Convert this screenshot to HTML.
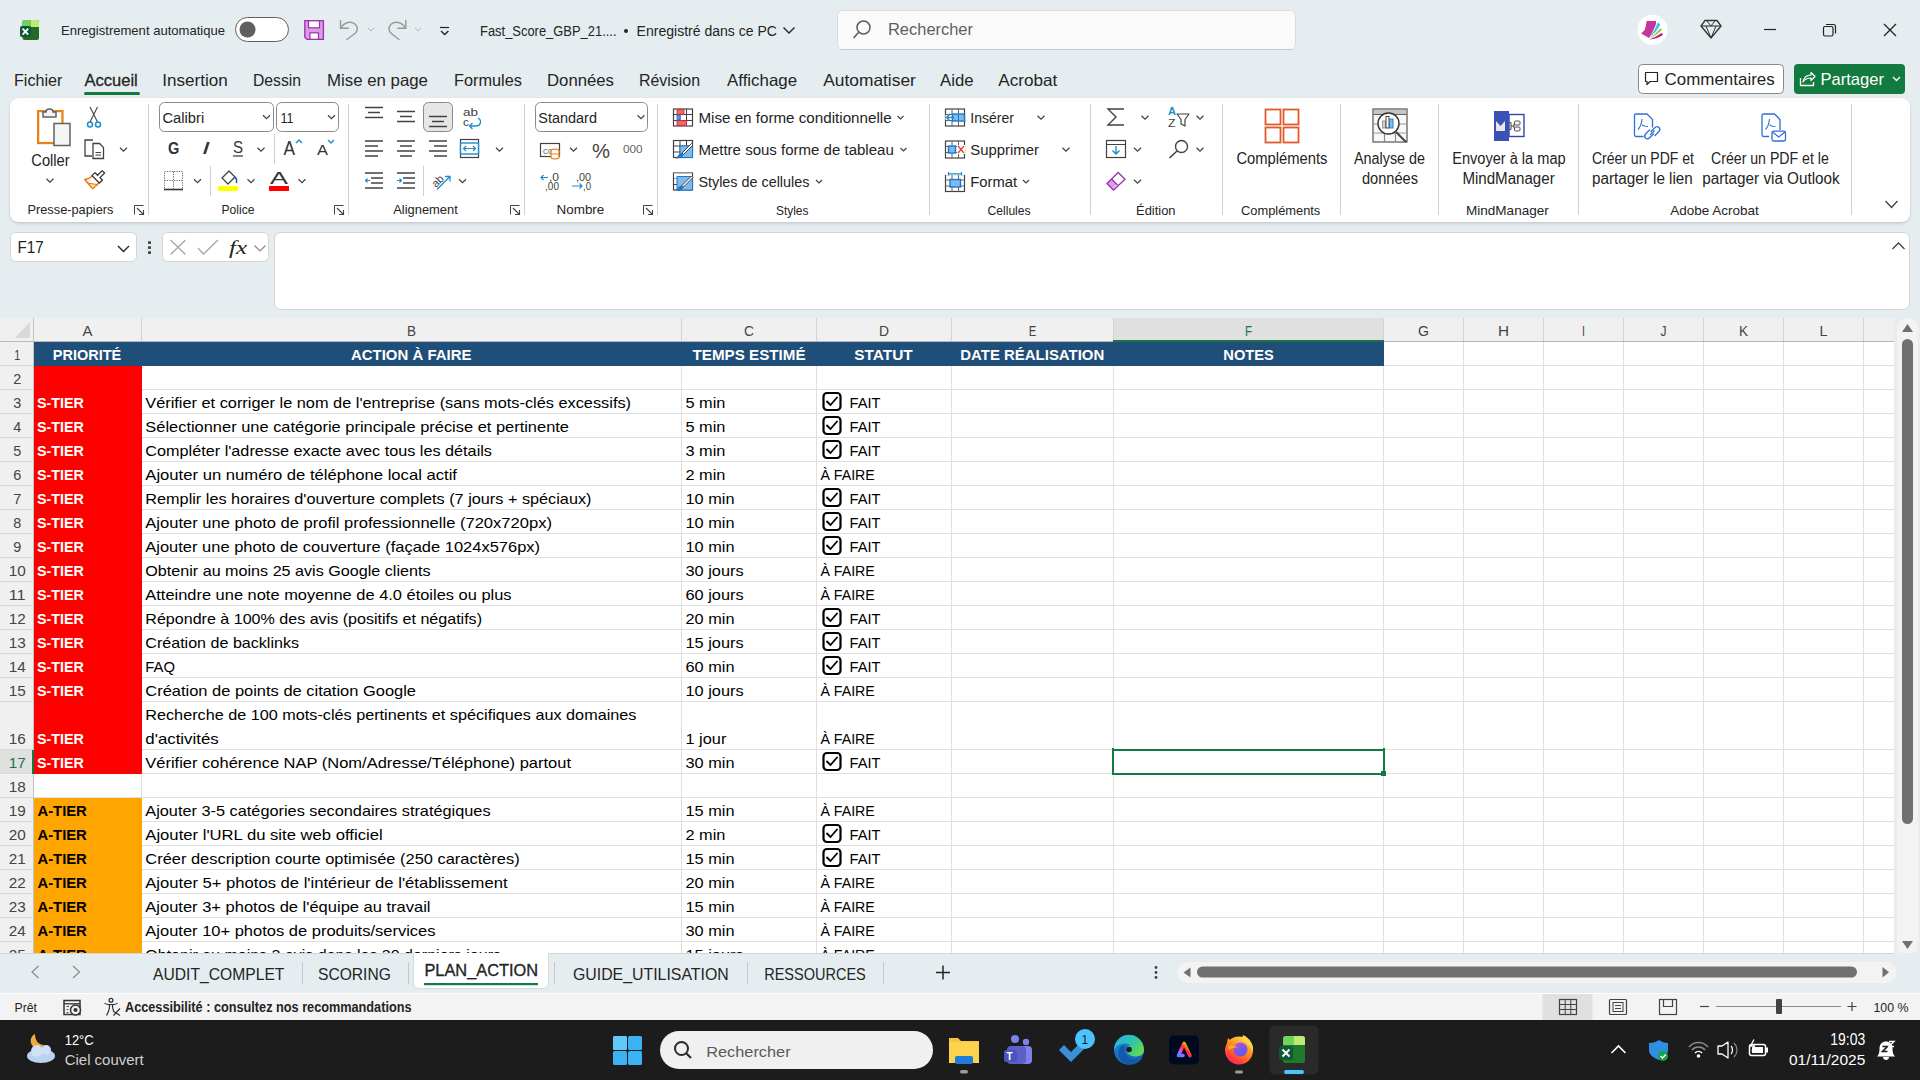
<!DOCTYPE html><html><head><meta charset="utf-8"><title>Excel</title><style>html,body{margin:0;padding:0;width:1920px;height:1080px;overflow:hidden;background:#e6edf0;}svg{display:block;font-family:"Liberation Sans",sans-serif;}</style></head><body>
<svg width="1920" height="1080" viewBox="0 0 1920 1080">
<rect x="0" y="0" width="1920" height="1080" fill="#e6edf0" />
<rect x="22.5" y="20" width="16.5" height="20" fill="#236b27" rx="2" />
<path d="M22.5 27 V22 Q22.5 20 24.5 20 H30.5 V27 Z" stroke="none" fill="#6fd35f" stroke-width="1" />
<path d="M30.5 20 H37 Q39 20 39 22 V27 H30.5 Z" stroke="none" fill="#bdea73" stroke-width="1" />
<rect x="20" y="26" width="11" height="11" fill="#0e5836" rx="2" />
<path d="M22.6 28.6 L28.2 34.6 M28.2 28.6 L22.6 34.6" stroke="#ffffff" fill="none" stroke-width="1.9" />
<text x="61.0" y="35" font-size="13.5" fill="#242424" textLength="163.97" lengthAdjust="spacingAndGlyphs" >Enregistrement automatique</text>
<rect x="235.5" y="17.5" width="53" height="24" fill="#ffffff" rx="12" stroke="#5f5f5f" stroke-width="1" />
<circle cx="247.5" cy="29.5" r="8" fill="#5f5f5f"/>
<path d="M304.8 20.6 H323.4 V39.4 H307 L304.8 37.2 Z" stroke="#9b2fae" fill="#dc9be6" stroke-width="1.3" />
<rect x="308.5" y="20.8" width="11" height="7" fill="#ffffff" stroke="#9b2fae" stroke-width="1.2" />
<rect x="310" y="32.8" width="8.5" height="6.5" fill="#ffffff" stroke="#9b2fae" stroke-width="1.2" />
<path d="M340.5 20 V28.3 H348.8" stroke="#999999" fill="none" stroke-width="1.4" />
<path d="M341 28 C344 22 352 20.5 355.5 24.5 C358 27.5 357.5 31 355 33.5 L346.5 39.7" stroke="#999999" fill="none" stroke-width="1.4" />
<path d="M368 28 L371 31 L374 28" stroke="#b0b4b8" fill="none" stroke-width="1" />
<path d="M405.8 20 V28.3 H397.3" stroke="#999999" fill="none" stroke-width="1.4" />
<path d="M405.3 28 C402.3 22 394.3 20.5 390.8 24.5 C388.3 27.5 388.8 31 391.3 33.5 L399.5 39.7" stroke="#999999" fill="none" stroke-width="1.4" />
<path d="M415 28 L418 31 L421 28" stroke="#b0b4b8" fill="none" stroke-width="1" />
<line x1="440" y1="27.5" x2="449" y2="27.5" stroke="#222" stroke-width="1.2" />
<path d="M441 31 L444.7 34.5 L448.4 31" stroke="#222" fill="none" stroke-width="1.3" />
<text x="480.0" y="36" font-size="15.3" fill="#242424" textLength="136.52" lengthAdjust="spacingAndGlyphs" >Fast_Score_GBP_21....</text>
<circle cx="626" cy="31" r="2" fill="#242424"/>
<text x="636.6" y="36" font-size="15.3" fill="#242424" textLength="140.4" lengthAdjust="spacingAndGlyphs" >Enregistré dans ce PC</text>
<path d="M783.5 27.5 L789 33 L794.5 27.5" stroke="#242424" fill="none" stroke-width="1.4" />
<rect x="837.5" y="10.5" width="458" height="39" fill="#fafafa" rx="5" stroke="#d9dcdf" stroke-width="1" />
<line x1="841" y1="49.5" x2="1292" y2="49.5" stroke="#c4c7cb" stroke-width="1" />
<circle cx="863.5" cy="27.5" r="6.5" fill="none" stroke="#5c5c5c" stroke-width="1.5"/>
<line x1="858.5" y1="32.5" x2="853.5" y2="38" stroke="#5c5c5c" stroke-width="1.6" />
<text x="888.0" y="35" font-size="16.0" fill="#5f5f5f" textLength="84.99" lengthAdjust="spacingAndGlyphs" >Rechercher</text>
<circle cx="1652.5" cy="29.8" r="15" fill="#ffffff"/>
<path d="M1646.7 21.1 H1656 Q1656.3 23 1655.7 25 Q1653 32 1649 37.9 L1641.2 33.4 Q1643.5 31.5 1644.7 30.1 Q1646 26 1646.7 21.1 Z" stroke="none" fill="#c8349a" stroke-width="1" />
<path d="M1657.5 22.8 Q1659.5 23.3 1660.3 24.8 Q1656 33 1648.6 37.8 Q1655 31 1657.5 22.8 Z" stroke="none" fill="#3bc3ef" stroke-width="1" />
<path d="M1660.3 28.2 Q1661.6 28.8 1662 29.8 Q1657 35.5 1649 38.3 Q1656 34 1660.3 28.2 Z" stroke="none" fill="#9fcd2f" stroke-width="1" />
<path d="M1661.6 33 Q1662.7 33.8 1663 35 Q1657 39 1649 39.5 Q1656 37 1661.6 33 Z" stroke="none" fill="#c8148c" stroke-width="1" />
<path d="M1705 20.5 H1717 L1721 26 L1711 38 L1701 26 Z" stroke="#333" fill="none" stroke-width="1.3" stroke-linejoin="round"/>
<line x1="1701" y1="26" x2="1721" y2="26" stroke="#333" stroke-width="1.1" />
<path d="M1707 21 L1711 26 L1715 21 M1706 26 L1711 38 L1716 26" stroke="#333" fill="none" stroke-width="1" />
<line x1="1764" y1="29.5" x2="1776" y2="29.5" stroke="#242424" stroke-width="1.2" />
<rect x="1823.5" y="26.5" width="9.5" height="9.5" fill="none" rx="1.5" stroke="#242424" stroke-width="1.2" />
<path d="M1826 24.5 H1833.5 Q1835.5 24.5 1835.5 26.5 V33.5" stroke="#242424" fill="none" stroke-width="1.2" />
<path d="M1884 24 L1896 36 M1896 24 L1884 36" stroke="#242424" fill="none" stroke-width="1.3" />
<text x="14.0" y="86" font-size="16.5" fill="#242424" textLength="48.41" lengthAdjust="spacingAndGlyphs" >Fichier</text>
<text x="84.4" y="86" font-size="16.5" fill="#242424" textLength="53.38" lengthAdjust="spacingAndGlyphs" stroke="#242424" stroke-width="0.3">Accueil</text>
<text x="162.3" y="86" font-size="16.5" fill="#242424" textLength="65.51" lengthAdjust="spacingAndGlyphs" >Insertion</text>
<text x="253.0" y="86" font-size="16.5" fill="#242424" textLength="48.03" lengthAdjust="spacingAndGlyphs" >Dessin</text>
<text x="327.0" y="86" font-size="16.5" fill="#242424" textLength="100.98" lengthAdjust="spacingAndGlyphs" >Mise en page</text>
<text x="454.0" y="86" font-size="16.5" fill="#242424" textLength="67.96" lengthAdjust="spacingAndGlyphs" >Formules</text>
<text x="547.0" y="86" font-size="16.5" fill="#242424" textLength="66.97" lengthAdjust="spacingAndGlyphs" >Données</text>
<text x="639.0" y="86" font-size="16.5" fill="#242424" textLength="61.0" lengthAdjust="spacingAndGlyphs" >Révision</text>
<text x="727.0" y="86" font-size="16.5" fill="#242424" textLength="70.03" lengthAdjust="spacingAndGlyphs" >Affichage</text>
<text x="823.3" y="86" font-size="16.5" fill="#242424" textLength="92.51" lengthAdjust="spacingAndGlyphs" >Automatiser</text>
<text x="940.0" y="86" font-size="16.5" fill="#242424" textLength="33.53" lengthAdjust="spacingAndGlyphs" >Aide</text>
<text x="998.3" y="86" font-size="16.5" fill="#242424" textLength="59.02" lengthAdjust="spacingAndGlyphs" >Acrobat</text>
<rect x="84" y="92" width="56" height="3" fill="#107c41" rx="1.5" />
<rect x="1638.5" y="64.5" width="145" height="29" fill="#ffffff" rx="4" stroke="#8a8a8a" stroke-width="1" />
<path d="M1645.5 72.5 H1657.5 V81.5 H1650 L1647 84.5 V81.5 H1645.5 Z" stroke="#242424" fill="none" stroke-width="1.2" stroke-linejoin="round"/>
<text x="1664.5" y="85" font-size="17.0" fill="#242424" textLength="110.24" lengthAdjust="spacingAndGlyphs" >Commentaires</text>
<rect x="1794" y="64" width="111" height="30" fill="#137b40" rx="4" />
<path d="M1800.5 78 V85.5 H1813.5 V82" stroke="#ffffff" fill="none" stroke-width="1.3" />
<path d="M1803 82 C1804 77 1807 75 1811 75 V72.5 L1815 76.5 L1811 80.5 V78 C1808 78 1805 79 1803 82 Z" stroke="#ffffff" fill="none" stroke-width="1.2" stroke-linejoin="round"/>
<text x="1820.5" y="85" font-size="17.0" fill="#ffffff" textLength="63.51" lengthAdjust="spacingAndGlyphs" >Partager</text>
<path d="M1893 77 L1896.5 80.5 L1900 77" stroke="#ffffff" fill="none" stroke-width="1.3" />
<defs><filter id="sh" x="-2%" y="-10%" width="104%" height="130%"><feDropShadow dx="0" dy="1.5" stdDeviation="1.6" flood-color="#000" flood-opacity="0.16"/></filter></defs>
<rect x="10" y="98" width="1900" height="124" fill="#ffffff" rx="9" filter="url(#sh)"/>
<rect x="38.1" y="111.1" width="24.4" height="32" fill="#fff6e6" stroke="#e8811a" stroke-width="2.2" />
<rect x="40" y="113" width="20" height="28" fill="#ffffff" />
<path d="M43 117 V112 H46 C46 108 53 108 53 112 H56 V117 Z" stroke="#616161" fill="#f5f5f5" stroke-width="1.5" />
<rect x="54" y="123.5" width="16" height="22" fill="#f5f5f5" stroke="#616161" stroke-width="1.5" />
<text x="31.3" y="165.5" font-size="16.3" fill="#242424" textLength="38.33" lengthAdjust="spacingAndGlyphs" >Coller</text>
<path d="M46.5 178.75 L50 182.25 L53.5 178.75" stroke="#424242" fill="none" stroke-width="1.2" />
<path d="M90 107 L97.5 122 M97.5 107 L90 122" stroke="#424242" fill="none" stroke-width="1.1" />
<circle cx="90" cy="124.5" r="2.5" fill="none" stroke="#1e8bcd" stroke-width="1.5"/><circle cx="98" cy="124.5" r="2.5" fill="none" stroke="#1e8bcd" stroke-width="1.5"/>
<path d="M93 140 H85 V156 H92" stroke="#424242" fill="none" stroke-width="1.3" />
<path d="M93 143.5 H99.5 L103.5 147.5 V158.5 H93 Z" stroke="#424242" fill="#fff" stroke-width="1.3" />
<line x1="95.5" y1="152.5" x2="101" y2="152.5" stroke="#424242" stroke-width="1" />
<line x1="95.5" y1="155" x2="101" y2="155" stroke="#424242" stroke-width="1" />
<path d="M120.0 147.75 L123.5 151.25 L127.0 147.75" stroke="#424242" fill="none" stroke-width="1.2" />
<path d="M92.5 176 Q89 178.8 84.8 179.6 L92.6 188.6 Q96 186 99 182.8" stroke="#e07a10" fill="#ffffff" stroke-width="1.6" stroke-linejoin="round"/>
<path d="M88.3 183.2 L97.6 184.6 L92.6 188.4 Z" stroke="#e07a10" fill="#f7df8c" stroke-width="1" />
<path d="M92 175.6 L95 172.6 L97.6 175.2 L102.2 170.6 L104.6 173 L100 177.6 L102.4 180 L99.4 183 Z" stroke="#333333" fill="#ffffff" stroke-width="1.3" stroke-linejoin="round"/>
<text x="27.5" y="214" font-size="12.6" fill="#242424" textLength="85.9" lengthAdjust="spacingAndGlyphs" >Presse-papiers</text>
<path d="M134.5 214.5 V205.5 H143.5" stroke="#424242" fill="none" stroke-width="1" />
<path d="M137 208 L143.5 214.5 M143.5 210 V214.5 H139" stroke="#424242" fill="none" stroke-width="1.1" />
<line x1="148.5" y1="104" x2="148.5" y2="215" stroke="#d0d0d0" stroke-width="1" />
<rect x="159.5" y="102.5" width="114" height="29" fill="#ffffff" rx="5" stroke="#8a8a8a" stroke-width="1" />
<text x="162.4" y="123" font-size="15.5" fill="#242424" textLength="41.79" lengthAdjust="spacingAndGlyphs" >Calibri</text>
<path d="M263.0 115.25 L266.5 118.75 L270.0 115.25" stroke="#424242" fill="none" stroke-width="1.2" />
<rect x="276.5" y="102.5" width="62" height="29" fill="#ffffff" rx="5" stroke="#8a8a8a" stroke-width="1" />
<text x="280.5" y="123" font-size="15.5" fill="#242424" textLength="12.98" lengthAdjust="spacingAndGlyphs" >11</text>
<path d="M328.0 115.25 L331.5 118.75 L335.0 115.25" stroke="#424242" fill="none" stroke-width="1.2" />
<text x="167.9" y="153.5" font-size="16.5" fill="#333" font-weight="700" textLength="11.37" lengthAdjust="spacingAndGlyphs" >G</text>
<text x="202.0" y="153.5" font-size="16.5" fill="#333" font-style="italic" textLength="7.94" lengthAdjust="spacingAndGlyphs" >I</text>
<text x="233.0" y="153" font-size="16.0" fill="#333" textLength="10.03" lengthAdjust="spacingAndGlyphs" >S</text>
<line x1="233" y1="156" x2="243" y2="156" stroke="#333" stroke-width="1.2" />
<path d="M257.5 147.75 L261 151.25 L264.5 147.75" stroke="#424242" fill="none" stroke-width="1.2" />
<line x1="274.5" y1="134" x2="274.5" y2="164" stroke="#d0d0d0" stroke-width="1" />
<text x="283.4" y="154.8" font-size="20.0" fill="#333" textLength="11.55" lengthAdjust="spacingAndGlyphs" >A</text>
<path d="M296 143 L299 140 L302 143" stroke="#1e8bcd" fill="none" stroke-width="1.4" />
<text x="317.0" y="154.8" font-size="15.5" fill="#333" textLength="10.95" lengthAdjust="spacingAndGlyphs" >A</text>
<path d="M328 140 L331 143 L334 140" stroke="#1e8bcd" fill="none" stroke-width="1.4" />
<rect x="164.5" y="171.5" width="18" height="18" fill="none" stroke="#666" stroke-width="1" stroke-dasharray="1.2 1.2"/>
<line x1="173.5" y1="171.5" x2="173.5" y2="189.5" stroke="#666" stroke-width="1" stroke-dasharray="1.2 1.2"/>
<line x1="164.5" y1="180.5" x2="182.5" y2="180.5" stroke="#666" stroke-width="1" stroke-dasharray="1.2 1.2"/>
<line x1="164" y1="189.5" x2="183" y2="189.5" stroke="#333" stroke-width="1.6" />
<path d="M194.0 179.25 L197.5 182.75 L201.0 179.25" stroke="#424242" fill="none" stroke-width="1.2" />
<line x1="210.5" y1="166" x2="210.5" y2="196" stroke="#d0d0d0" stroke-width="1" />
<path d="M222 178 L229 171 L235 177 L228 184 Z" stroke="#424242" fill="#fff" stroke-width="1.3" stroke-linejoin="round"/>
<path d="M234 178 C236 176 237 180 236.5 183" stroke="#1e5aa8" fill="none" stroke-width="1.6" />
<rect x="218" y="186" width="20" height="5" fill="#ffff00" />
<path d="M247.5 179.25 L251 182.75 L254.5 179.25" stroke="#424242" fill="none" stroke-width="1.2" />
<text x="270.0" y="183.5" font-size="17.0" fill="#333" textLength="17.92" lengthAdjust="spacingAndGlyphs" >A</text>
<rect x="269" y="186" width="20" height="5" fill="#ff0000" />
<path d="M298.5 179.25 L302 182.75 L305.5 179.25" stroke="#424242" fill="none" stroke-width="1.2" />
<text x="221.4" y="214" font-size="12.6" fill="#242424" textLength="33.08" lengthAdjust="spacingAndGlyphs" >Police</text>
<path d="M334.5 214.5 V205.5 H343.5" stroke="#424242" fill="none" stroke-width="1" />
<path d="M337 208 L343.5 214.5 M343.5 210 V214.5 H339" stroke="#424242" fill="none" stroke-width="1.1" />
<line x1="348.5" y1="104" x2="348.5" y2="215" stroke="#d0d0d0" stroke-width="1" />
<line x1="365" y1="107.5" x2="383" y2="107.5" stroke="#424242" stroke-width="1.5" />
<line x1="368" y1="112.5" x2="380" y2="112.5" stroke="#424242" stroke-width="1.5" />
<line x1="365" y1="117.5" x2="383" y2="117.5" stroke="#424242" stroke-width="1.5" />
<line x1="397" y1="111.5" x2="415" y2="111.5" stroke="#424242" stroke-width="1.5" />
<line x1="400" y1="116.5" x2="412" y2="116.5" stroke="#424242" stroke-width="1.5" />
<line x1="397" y1="121.5" x2="415" y2="121.5" stroke="#424242" stroke-width="1.5" />
<rect x="423.5" y="102.5" width="29" height="29" fill="#e6e6e6" rx="5" stroke="#8a8a8a" stroke-width="1" />
<line x1="429" y1="116.5" x2="447" y2="116.5" stroke="#424242" stroke-width="1.5" />
<line x1="432" y1="121.5" x2="444" y2="121.5" stroke="#424242" stroke-width="1.5" />
<line x1="429" y1="126.5" x2="447" y2="126.5" stroke="#424242" stroke-width="1.5" />
<text x="463.0" y="116" font-size="11.0" fill="#424242" textLength="15.03" lengthAdjust="spacingAndGlyphs" >ab</text>
<text x="463.0" y="125.5" font-size="11.0" fill="#424242" textLength="6.0" lengthAdjust="spacingAndGlyphs" >c</text>
<path d="M478 118 C482 120 481 126 476 126 H470 M472.5 123 L469.5 126 L472.5 129" stroke="#1e8bcd" fill="none" stroke-width="1.3" />
<line x1="365" y1="141" x2="383" y2="141" stroke="#424242" stroke-width="1.5" />
<line x1="365" y1="146" x2="378" y2="146" stroke="#424242" stroke-width="1.5" />
<line x1="365" y1="151" x2="383" y2="151" stroke="#424242" stroke-width="1.5" />
<line x1="365" y1="156" x2="378" y2="156" stroke="#424242" stroke-width="1.5" />
<line x1="397" y1="141" x2="415" y2="141" stroke="#424242" stroke-width="1.5" />
<line x1="400" y1="146" x2="412" y2="146" stroke="#424242" stroke-width="1.5" />
<line x1="397" y1="151" x2="415" y2="151" stroke="#424242" stroke-width="1.5" />
<line x1="400" y1="156" x2="412" y2="156" stroke="#424242" stroke-width="1.5" />
<line x1="429" y1="141" x2="447" y2="141" stroke="#424242" stroke-width="1.5" />
<line x1="434" y1="146" x2="447" y2="146" stroke="#424242" stroke-width="1.5" />
<line x1="429" y1="151" x2="447" y2="151" stroke="#424242" stroke-width="1.5" />
<line x1="434" y1="156" x2="447" y2="156" stroke="#424242" stroke-width="1.5" />
<rect x="460.5" y="139.5" width="18" height="18" fill="none" stroke="#424242" stroke-width="1.2" />
<rect x="460.5" y="143" width="18" height="11" fill="#ffffff" stroke="#1e8bcd" stroke-width="1.4" />
<path d="M463.5 148.5 H475.5 M466 146 L463.5 148.5 L466 151 M473 146 L475.5 148.5 L473 151" stroke="#1e8bcd" fill="none" stroke-width="1.2" />
<path d="M496.0 147.75 L499.5 151.25 L503.0 147.75" stroke="#424242" fill="none" stroke-width="1.2" />
<line x1="365" y1="173" x2="383" y2="173" stroke="#424242" stroke-width="1.5" />
<line x1="371" y1="178" x2="383" y2="178" stroke="#424242" stroke-width="1.5" />
<line x1="371" y1="183" x2="383" y2="183" stroke="#424242" stroke-width="1.5" />
<line x1="365" y1="188" x2="383" y2="188" stroke="#424242" stroke-width="1.5" />
<path d="M370 180.5 H365.5 M367.5 178.5 L365.5 180.5 L367.5 182.5" stroke="#1e8bcd" fill="none" stroke-width="1.2" />
<line x1="397" y1="173" x2="415" y2="173" stroke="#424242" stroke-width="1.5" />
<line x1="403" y1="178" x2="415" y2="178" stroke="#424242" stroke-width="1.5" />
<line x1="403" y1="183" x2="415" y2="183" stroke="#424242" stroke-width="1.5" />
<line x1="397" y1="188" x2="415" y2="188" stroke="#424242" stroke-width="1.5" />
<path d="M397 180.5 H401.5 M399.5 178.5 L401.5 180.5 L399.5 182.5" stroke="#1e8bcd" fill="none" stroke-width="1.2" />
<line x1="423.5" y1="166" x2="423.5" y2="196" stroke="#d0d0d0" stroke-width="1" />
<text x="431" y="186" font-size="11" fill="#424242" transform="rotate(-45 436 181)">ab</text>
<line x1="437" y1="189.5" x2="450" y2="176.5" stroke="#1e8bcd" stroke-width="1.3" />
<path d="M445 176.5 H450 V181.5" stroke="#1e8bcd" fill="none" stroke-width="1.3" />
<path d="M459.0 179.25 L462.5 182.75 L466.0 179.25" stroke="#424242" fill="none" stroke-width="1.2" />
<text x="393.2" y="214" font-size="12.6" fill="#242424" textLength="64.58" lengthAdjust="spacingAndGlyphs" >Alignement</text>
<path d="M510.5 214.5 V205.5 H519.5" stroke="#424242" fill="none" stroke-width="1" />
<path d="M513 208 L519.5 214.5 M519.5 210 V214.5 H515" stroke="#424242" fill="none" stroke-width="1.1" />
<line x1="524.5" y1="104" x2="524.5" y2="215" stroke="#d0d0d0" stroke-width="1" />
<rect x="535.5" y="102.5" width="112" height="29" fill="#ffffff" rx="5" stroke="#8a8a8a" stroke-width="1" />
<text x="538.3" y="123" font-size="15.5" fill="#242424" textLength="58.68" lengthAdjust="spacingAndGlyphs" >Standard</text>
<path d="M637.5 115.25 L641 118.75 L644.5 115.25" stroke="#424242" fill="none" stroke-width="1.2" />
<rect x="540.5" y="143.5" width="19" height="13" fill="none" stroke="#424242" stroke-width="1.2" />
<text x="543.0" y="153.5" font-size="8.0" fill="#424242" textLength="10.0" lengthAdjust="spacingAndGlyphs" >CC</text>
<ellipse cx="555" cy="151" rx="4" ry="1.8" fill="#fff" stroke="#e8811a" stroke-width="1.3"/>
<path d="M551 151 V157 C551 159.5 559 159.5 559 157 V151" stroke="#e8811a" fill="#fff" stroke-width="1.3" />
<line x1="551" y1="154" x2="559" y2="154" stroke="#e8811a" stroke-width="1" />
<path d="M570.0 147.75 L573.5 151.25 L577.0 147.75" stroke="#424242" fill="none" stroke-width="1.2" />
<text x="592.0" y="157.5" font-size="21.0" fill="#424242" textLength="17.98" lengthAdjust="spacingAndGlyphs" >%</text>
<text x="623.0" y="153" font-size="11.0" fill="#616161" textLength="19.58" lengthAdjust="spacingAndGlyphs" >000</text>
<text x="549.0" y="181" font-size="10.0" fill="#424242" textLength="9.99" lengthAdjust="spacingAndGlyphs" >,0</text>
<text x="545.0" y="190" font-size="10.0" fill="#424242" textLength="14.0" lengthAdjust="spacingAndGlyphs" >,00</text>
<path d="M548 177.5 H541 M543.5 175 L541 177.5 L543.5 180" stroke="#1e8bcd" fill="none" stroke-width="1.2" />
<text x="576.0" y="181" font-size="10.0" fill="#424242" textLength="15.0" lengthAdjust="spacingAndGlyphs" >,00</text>
<text x="583.0" y="190" font-size="10.0" fill="#424242" textLength="7.99" lengthAdjust="spacingAndGlyphs" >,0</text>
<path d="M572 186 H582 M579.5 183.5 L582 186 L579.5 188.5" stroke="#1e8bcd" fill="none" stroke-width="1.2" />
<text x="556.5" y="214" font-size="12.6" fill="#242424" textLength="47.82" lengthAdjust="spacingAndGlyphs" >Nombre</text>
<path d="M643.5 214.5 V205.5 H652.5" stroke="#424242" fill="none" stroke-width="1" />
<path d="M646 208 L652.5 214.5 M652.5 210 V214.5 H648" stroke="#424242" fill="none" stroke-width="1.1" />
<line x1="657.5" y1="104" x2="657.5" y2="215" stroke="#d0d0d0" stroke-width="1" />
<rect x="673.5" y="109.0" width="19" height="17" fill="#ffffff" stroke="#424242" stroke-width="1.2" />
<line x1="673.5" y1="114.5" x2="692.5" y2="114.5" stroke="#424242" stroke-width="1" />
<line x1="673.5" y1="120.5" x2="692.5" y2="120.5" stroke="#424242" stroke-width="1" />
<line x1="680" y1="109.0" x2="680" y2="126.0" stroke="#424242" stroke-width="1" />
<line x1="686.5" y1="109.0" x2="686.5" y2="126.0" stroke="#424242" stroke-width="1" />
<rect x="677" y="109.7" width="7" height="4.6" fill="#f06a74" stroke="#d9262f" stroke-width="0.9" />
<rect x="677" y="115.3" width="3" height="4.4" fill="#4fa3e0" stroke="#1e78c8" stroke-width="0.9" />
<rect x="677" y="120.7" width="9.5" height="4.6" fill="#f06a74" stroke="#d9262f" stroke-width="0.9" />
<text x="698.4" y="122.8" font-size="15.2" fill="#242424" textLength="193.19" lengthAdjust="spacingAndGlyphs" >Mise en forme conditionnelle</text>
<path d="M897.5 116.0 L900.5 119.0 L903.5 116.0" stroke="#424242" fill="none" stroke-width="1.2" />
<rect x="673.5" y="140.5" width="19" height="17" fill="#ffffff" stroke="#424242" stroke-width="1.2" />
<line x1="673.5" y1="146" x2="692.5" y2="146" stroke="#424242" stroke-width="1" />
<line x1="673.5" y1="152" x2="692.5" y2="152" stroke="#424242" stroke-width="1" />
<line x1="680" y1="140.5" x2="680" y2="157.5" stroke="#424242" stroke-width="1" />
<line x1="686.5" y1="140.5" x2="686.5" y2="157.5" stroke="#424242" stroke-width="1" />
<path d="M680 146 H692.5 V157.5 H680 Z" stroke="#1e78c8" fill="#7fbbea" stroke-width="1" />
<path d="M682 153 L691.5 143.5 L693 145 L683.5 154.5 Z" stroke="#424242" fill="#ffffff" stroke-width="1" />
<path d="M682 153 C679 153 678 156 676 158.5 C680 158.5 683 157 683.5 154.5 Z" stroke="none" fill="#1e78c8" stroke-width="1" />
<text x="698.4" y="155" font-size="15.2" fill="#242424" textLength="195.38" lengthAdjust="spacingAndGlyphs" >Mettre sous forme de tableau</text>
<path d="M900.5 148.0 L903.5 151.0 L906.5 148.0" stroke="#424242" fill="none" stroke-width="1.2" />
<rect x="673.5" y="173.0" width="19" height="17" fill="#ffffff" stroke="#424242" stroke-width="1.2" />
<line x1="673.5" y1="178.5" x2="692.5" y2="178.5" stroke="#424242" stroke-width="1" />
<line x1="673.5" y1="184.5" x2="692.5" y2="184.5" stroke="#424242" stroke-width="1" />
<line x1="680" y1="173.0" x2="680" y2="190.0" stroke="#424242" stroke-width="1" />
<line x1="686.5" y1="173.0" x2="686.5" y2="190.0" stroke="#424242" stroke-width="1" />
<rect x="674" y="173.5" width="18" height="5" fill="#ffffff" />
<path d="M677 176.5 H692.5 V190.0 H677 Z" stroke="#1e78c8" fill="#7fbbea" stroke-width="1" />
<path d="M682 185.5 L691.5 176.0 L693 177.5 L683.5 187.0 Z" stroke="#424242" fill="#ffffff" stroke-width="1" />
<path d="M682 185.5 C679 185.5 678 188.5 676 191.0 C680 191.0 683 189.5 683.5 187.0 Z" stroke="none" fill="#1e78c8" stroke-width="1" />
<text x="698.4" y="187" font-size="15.2" fill="#242424" textLength="111.02" lengthAdjust="spacingAndGlyphs" >Styles de cellules</text>
<path d="M816 180.0 L819 183.0 L822 180.0" stroke="#424242" fill="none" stroke-width="1.2" />
<text x="776.0" y="215" font-size="12.6" fill="#242424" textLength="32.38" lengthAdjust="spacingAndGlyphs" >Styles</text>
<line x1="929.5" y1="104" x2="929.5" y2="215" stroke="#d0d0d0" stroke-width="1" />
<text x="970.3" y="122.8" font-size="15.2" fill="#242424" textLength="43.73" lengthAdjust="spacingAndGlyphs" >Insérer</text>
<rect x="945.5" y="109.0" width="19" height="17" fill="#ffffff" stroke="#424242" stroke-width="1.2" />
<line x1="945.5" y1="114.5" x2="964.5" y2="114.5" stroke="#616161" stroke-width="1" />
<line x1="945.5" y1="120.5" x2="964.5" y2="120.5" stroke="#616161" stroke-width="1" />
<line x1="952" y1="109.0" x2="952" y2="126.0" stroke="#616161" stroke-width="1" />
<line x1="958.5" y1="109.0" x2="958.5" y2="126.0" stroke="#616161" stroke-width="1" />
<rect x="952.5" y="114.0" width="12" height="7" fill="#7fbbea" stroke="#1e78c8" stroke-width="1.4" />
<line x1="958.5" y1="114.5" x2="958.5" y2="120.5" stroke="#1e78c8" stroke-width="1" />
<rect x="945.5" y="115.0" width="6" height="5" fill="#ffffff" />
<path d="M954 117.5 H946.5 M950 114.0 L946.5 117.5 L950 121.0" stroke="#1e8bcd" fill="none" stroke-width="1.4" />
<path d="M1037.5 115.75 L1041 119.25 L1044.5 115.75" stroke="#424242" fill="none" stroke-width="1.2" />
<rect x="945.5" y="141.0" width="19" height="17" fill="#ffffff" stroke="#424242" stroke-width="1.2" />
<line x1="945.5" y1="146.5" x2="964.5" y2="146.5" stroke="#616161" stroke-width="1" />
<line x1="945.5" y1="152.5" x2="964.5" y2="152.5" stroke="#616161" stroke-width="1" />
<line x1="952" y1="141.0" x2="952" y2="158.0" stroke="#616161" stroke-width="1" />
<line x1="958.5" y1="141.0" x2="958.5" y2="158.0" stroke="#616161" stroke-width="1" />
<rect x="948.5" y="146.0" width="7" height="7" fill="#7fbbea" stroke="#1e78c8" stroke-width="1.4" />
<rect x="957" y="145.0" width="8" height="9" fill="#ffffff" />
<path d="M958 146.0 L964 153.0 M964 146.0 L958 153.0" stroke="#e8412b" fill="none" stroke-width="1.3" />
<text x="970.3" y="155" font-size="15.2" fill="#242424" textLength="68.67" lengthAdjust="spacingAndGlyphs" >Supprimer</text>
<path d="M1062.5 147.75 L1066 151.25 L1069.5 147.75" stroke="#424242" fill="none" stroke-width="1.2" />
<rect x="945.5" y="174.5" width="19" height="17" fill="#ffffff" stroke="#424242" stroke-width="1.2" />
<line x1="945.5" y1="180" x2="964.5" y2="180" stroke="#616161" stroke-width="1" />
<line x1="945.5" y1="186" x2="964.5" y2="186" stroke="#616161" stroke-width="1" />
<line x1="952" y1="174.5" x2="952" y2="191.5" stroke="#616161" stroke-width="1" />
<line x1="958.5" y1="174.5" x2="958.5" y2="191.5" stroke="#616161" stroke-width="1" />
<rect x="945" y="172" width="20" height="3" fill="#ffffff" />
<path d="M948.5 172 V175.5 M961.5 172 V175.5 M948.5 173.8 H961.5" stroke="#1e8bcd" fill="none" stroke-width="1.2" />
<rect x="950" y="179.5" width="10.5" height="7.5" fill="#7fbbea" stroke="#1e78c8" stroke-width="1.4" />
<text x="970.3" y="187" font-size="15.2" fill="#242424" textLength="46.73" lengthAdjust="spacingAndGlyphs" >Format</text>
<path d="M1023 180.0 L1026 183.0 L1029 180.0" stroke="#424242" fill="none" stroke-width="1.2" />
<text x="987.5" y="215" font-size="12.6" fill="#242424" textLength="43.13" lengthAdjust="spacingAndGlyphs" >Cellules</text>
<line x1="1090.5" y1="104" x2="1090.5" y2="215" stroke="#d0d0d0" stroke-width="1" />
<path d="M1124 109 H1108 L1116 117 L1108 125 H1124" stroke="#424242" fill="none" stroke-width="1.4" />
<path d="M1141.5 115.75 L1145 119.25 L1148.5 115.75" stroke="#424242" fill="none" stroke-width="1.2" />
<text x="1168.0" y="115" font-size="10.0" fill="#1e8bcd" font-weight="700" textLength="8.02" lengthAdjust="spacingAndGlyphs" >A</text>
<text x="1168.0" y="126.5" font-size="10.0" fill="#424242" textLength="7.51" lengthAdjust="spacingAndGlyphs" >Z</text>
<path d="M1177 114 H1189 L1185 119.5 V126 L1181 124 V119.5 Z" stroke="#424242" fill="none" stroke-width="1.2" stroke-linejoin="round"/>
<path d="M1196.5 115.75 L1200 119.25 L1203.5 115.75" stroke="#424242" fill="none" stroke-width="1.2" />
<rect x="1106.5" y="140.5" width="19" height="17" fill="#ffffff" stroke="#424242" stroke-width="1.2" />
<line x1="1106.5" y1="144.5" x2="1125.5" y2="144.5" stroke="#424242" stroke-width="1" />
<path d="M1116 146 V154 M1112.5 150.5 L1116 154 L1119.5 150.5" stroke="#1e8bcd" fill="none" stroke-width="1.4" />
<path d="M1134.0 147.75 L1137.5 151.25 L1141.0 147.75" stroke="#424242" fill="none" stroke-width="1.2" />
<circle cx="1181.5" cy="146.5" r="6" fill="none" stroke="#424242" stroke-width="1.4"/>
<line x1="1177" y1="151" x2="1169.5" y2="158" stroke="#424242" stroke-width="1.6" />
<path d="M1196.5 147.75 L1200 151.25 L1203.5 147.75" stroke="#424242" fill="none" stroke-width="1.2" />
<path d="M1107 183.5 L1111.5 179 L1117 184.5 L1113 189 Z" stroke="none" fill="#dc9ee6" stroke-width="1" />
<path d="M1107 183.5 L1118.2 172.5 L1125 179.2 L1113.5 190 Z" stroke="#9b2fae" fill="none" stroke-width="1.3" stroke-linejoin="miter"/>
<path d="M1111.5 179 L1117.5 185" stroke="#9b2fae" fill="none" stroke-width="1.3" />
<path d="M1134.0 179.75 L1137.5 183.25 L1141.0 179.75" stroke="#424242" fill="none" stroke-width="1.2" />
<text x="1136.0" y="215" font-size="12.6" fill="#242424" textLength="39.57" lengthAdjust="spacingAndGlyphs" >Édition</text>
<line x1="1222.5" y1="104" x2="1222.5" y2="215" stroke="#d0d0d0" stroke-width="1" />
<rect x="1265.5" y="109.5" width="15" height="15" fill="none" stroke="#e05a2b" stroke-width="1.8" />
<rect x="1283.5" y="109.5" width="15" height="15" fill="none" stroke="#e05a2b" stroke-width="1.8" />
<rect x="1265.5" y="127.5" width="15" height="15" fill="none" stroke="#e05a2b" stroke-width="1.8" />
<rect x="1283.5" y="127.5" width="15" height="15" fill="none" stroke="#e05a2b" stroke-width="1.8" />
<text x="1236.4" y="163.7" font-size="16.0" fill="#242424" textLength="91.09" lengthAdjust="spacingAndGlyphs" >Compléments</text>
<text x="1241.0" y="215" font-size="12.6" fill="#242424" textLength="79.29" lengthAdjust="spacingAndGlyphs" >Compléments</text>
<line x1="1340.5" y1="104" x2="1340.5" y2="215" stroke="#d0d0d0" stroke-width="1" />
<rect x="1373" y="109" width="34" height="33" fill="#f8f8f8" stroke="#616161" stroke-width="1.3" />
<rect x="1374" y="110" width="32" height="4" fill="#c4c4c4" />
<line x1="1373" y1="114.5" x2="1407" y2="114.5" stroke="#616161" stroke-width="1.2" />
<line x1="1373" y1="124" x2="1407" y2="124" stroke="#9a9a9a" stroke-width="1" />
<line x1="1373" y1="133" x2="1407" y2="133" stroke="#9a9a9a" stroke-width="1" />
<line x1="1384.5" y1="133" x2="1384.5" y2="142" stroke="#8a8a8a" stroke-width="1.2" />
<line x1="1395.5" y1="133" x2="1395.5" y2="142" stroke="#8a8a8a" stroke-width="1.2" />
<circle cx="1388.5" cy="123.5" r="10.5" fill="#ffffff" stroke="#333333" stroke-width="1.4"/>
<rect x="1382.5" y="121" width="3" height="7" fill="#d0d0d0" stroke="#8a8a8a" stroke-width="0.8" />
<rect x="1386" y="116.5" width="3" height="11.5" fill="#ffffff" stroke="#333" stroke-width="0.9" />
<rect x="1389.5" y="119" width="3.5" height="9" fill="#7fbbea" stroke="#1e78c8" stroke-width="0.9" />
<line x1="1396" y1="132" x2="1406" y2="142" stroke="#424242" stroke-width="2" />
<text x="1354.0" y="163.7" font-size="16.0" fill="#242424" textLength="70.97" lengthAdjust="spacingAndGlyphs" >Analyse de</text>
<text x="1362.0" y="183.7" font-size="16.0" fill="#242424" textLength="56.03" lengthAdjust="spacingAndGlyphs" >données</text>
<line x1="1438.5" y1="104" x2="1438.5" y2="215" stroke="#d0d0d0" stroke-width="1" />
<rect x="1509" y="114.5" width="15" height="22" fill="#ffffff" stroke="#2f45b0" stroke-width="1.4" />
<rect x="1494" y="111" width="15" height="30" fill="#3a52b8" />
<path d="M1496 131 V121 L1500.5 126 L1505 121 V131 Z" stroke="none" fill="#e8e8e8" stroke-width="1" />
<path d="M1509.5 122.5 H1511 V129.5 H1509.5 M1511 126 H1514 M1514 123.5 V128.5" stroke="#444" fill="none" stroke-width="1" />
<rect x="1514.5" y="121" width="5.5" height="4" fill="#f4f4f4" rx="1" stroke="#444" stroke-width="0.9" />
<rect x="1514.5" y="127" width="5.5" height="4" fill="#f4f4f4" rx="1" stroke="#444" stroke-width="0.9" />
<text x="1452.2" y="163.7" font-size="16.0" fill="#242424" textLength="113.43" lengthAdjust="spacingAndGlyphs" >Envoyer à la map</text>
<text x="1462.4" y="183.7" font-size="16.0" fill="#242424" textLength="92.29" lengthAdjust="spacingAndGlyphs" >MindManager</text>
<text x="1466.0" y="215" font-size="12.6" fill="#242424" textLength="82.79" lengthAdjust="spacingAndGlyphs" >MindManager</text>
<line x1="1578.5" y1="104" x2="1578.5" y2="215" stroke="#d0d0d0" stroke-width="1" />
<path d="M1643.5 136.5 H1636 Q1634.5 136.5 1634.5 135 V115.5 Q1634.5 114 1636 114 H1647 L1652.5 119.5 V127.5" stroke="#2f6fd6" fill="none" stroke-width="1.3" stroke-linejoin="round"/>
<path d="M1638 129.5 C1640 127.5 1641.5 124 1642 119 M1642 124.5 C1643 126 1645 126.5 1648 126.5" stroke="#2f6fd6" fill="none" stroke-width="1.1" />
<path d="M1651 131.5 L1654.5 128 C1656 126.5 1658 126.5 1659 127.5 C1660 128.5 1660 130.5 1658.5 132 L1655 135.5 M1653.5 134 L1650 137.5 C1648.5 139 1646.5 139 1645.5 138 C1644.5 137 1644.5 135 1646 133.5 L1649.5 130 M1650.5 134.5 L1654 131" stroke="#2f6fd6" fill="none" stroke-width="1.3" stroke-linecap="round"/>
<text x="1591.9" y="163.7" font-size="16.0" fill="#242424" textLength="102.11" lengthAdjust="spacingAndGlyphs" >Créer un PDF et</text>
<text x="1592.0" y="183.7" font-size="16.0" fill="#242424" textLength="100.81" lengthAdjust="spacingAndGlyphs" >partager le lien</text>
<path d="M1769 136.5 H1763.5 Q1762 136.5 1762 135 V115.5 Q1762 114 1763.5 114 H1774.5 L1780 119.5 V130" stroke="#2f6fd6" fill="none" stroke-width="1.3" stroke-linejoin="round"/>
<path d="M1765.5 129.5 C1767.5 127.5 1769 124 1769.5 119 M1769.5 124.5 C1770.5 126 1772.5 126.5 1775.5 126.5" stroke="#2f6fd6" fill="none" stroke-width="1.1" />
<rect x="1772" y="131.2" width="13.5" height="9.8" fill="#ffffff" rx="1.8" stroke="#2f6fd6" stroke-width="1.3" />
<path d="M1772.5 132 L1778.75 137 L1785 132" stroke="#2f6fd6" fill="none" stroke-width="1.2" />
<text x="1711.0" y="163.7" font-size="16.0" fill="#242424" textLength="117.82" lengthAdjust="spacingAndGlyphs" >Créer un PDF et le</text>
<text x="1702.3" y="183.7" font-size="16.0" fill="#242424" textLength="137.42" lengthAdjust="spacingAndGlyphs" >partager via Outlook</text>
<text x="1670.2" y="215" font-size="12.6" fill="#242424" textLength="88.61" lengthAdjust="spacingAndGlyphs" >Adobe Acrobat</text>
<line x1="1851.5" y1="104" x2="1851.5" y2="215" stroke="#d0d0d0" stroke-width="1" />
<path d="M1885.5 201 L1891.5 207.5 L1897.5 201" stroke="#424242" fill="none" stroke-width="1.3" />
<rect x="10.5" y="232.5" width="126" height="29" fill="#ffffff" rx="5" stroke="#d4d4d4" stroke-width="1" />
<text x="17.5" y="253" font-size="17.0" fill="#242424" textLength="26.22" lengthAdjust="spacingAndGlyphs" >F17</text>
<path d="M118 246 L123.5 251.5 L129 246" stroke="#242424" fill="none" stroke-width="1.4" />
<rect x="148" y="241.3" width="3" height="2.6" fill="#424242" />
<rect x="148" y="246.3" width="3" height="2.6" fill="#424242" />
<rect x="148" y="251.3" width="3" height="2.6" fill="#424242" />
<rect x="162.5" y="232.5" width="106" height="29" fill="#ffffff" rx="5" stroke="#d4d4d4" stroke-width="1" />
<path d="M170.5 240 L185.5 254.5 M185.5 240 L170.5 254.5" stroke="#a8a8a8" fill="none" stroke-width="1.4" />
<path d="M198 248 L203.5 254 L218 240" stroke="#a8a8a8" fill="none" stroke-width="1.4" />
<text x="229" y="254" font-size="19" font-style="italic" font-family="Liberation Serif" fill="#242424" textLength="18" lengthAdjust="spacingAndGlyphs">fx</text>
<path d="M254.5 245.5 L260 251 L265.5 245.5" stroke="#8a8a8a" fill="none" stroke-width="1.2" />
<rect x="274.5" y="232.5" width="1635" height="77" fill="#ffffff" rx="6" stroke="#d4d4d4" stroke-width="1" />
<path d="M1892.5 249 L1898.5 243 L1904.5 249" stroke="#424242" fill="none" stroke-width="1.3" />
<rect x="34" y="342" width="1860" height="611" fill="#ffffff" />
<rect x="0" y="318" width="1894" height="23" fill="#f0f0f0" />
<rect x="0" y="342" width="33" height="611" fill="#f0f0f0" />
<rect x="1114" y="318" width="269" height="23" fill="#e0e0e0" />
<rect x="0" y="750" width="33" height="24" fill="#e0e0e0" />
<line x1="34" y1="365.5" x2="1894" y2="365.5" stroke="#e0e0e0" stroke-width="1" />
<line x1="0" y1="365.5" x2="33" y2="365.5" stroke="#d9d9d9" stroke-width="1" />
<line x1="34" y1="389.5" x2="1894" y2="389.5" stroke="#e0e0e0" stroke-width="1" />
<line x1="0" y1="389.5" x2="33" y2="389.5" stroke="#d9d9d9" stroke-width="1" />
<line x1="34" y1="413.5" x2="1894" y2="413.5" stroke="#e0e0e0" stroke-width="1" />
<line x1="0" y1="413.5" x2="33" y2="413.5" stroke="#d9d9d9" stroke-width="1" />
<line x1="34" y1="437.5" x2="1894" y2="437.5" stroke="#e0e0e0" stroke-width="1" />
<line x1="0" y1="437.5" x2="33" y2="437.5" stroke="#d9d9d9" stroke-width="1" />
<line x1="34" y1="461.5" x2="1894" y2="461.5" stroke="#e0e0e0" stroke-width="1" />
<line x1="0" y1="461.5" x2="33" y2="461.5" stroke="#d9d9d9" stroke-width="1" />
<line x1="34" y1="485.5" x2="1894" y2="485.5" stroke="#e0e0e0" stroke-width="1" />
<line x1="0" y1="485.5" x2="33" y2="485.5" stroke="#d9d9d9" stroke-width="1" />
<line x1="34" y1="509.5" x2="1894" y2="509.5" stroke="#e0e0e0" stroke-width="1" />
<line x1="0" y1="509.5" x2="33" y2="509.5" stroke="#d9d9d9" stroke-width="1" />
<line x1="34" y1="533.5" x2="1894" y2="533.5" stroke="#e0e0e0" stroke-width="1" />
<line x1="0" y1="533.5" x2="33" y2="533.5" stroke="#d9d9d9" stroke-width="1" />
<line x1="34" y1="557.5" x2="1894" y2="557.5" stroke="#e0e0e0" stroke-width="1" />
<line x1="0" y1="557.5" x2="33" y2="557.5" stroke="#d9d9d9" stroke-width="1" />
<line x1="34" y1="581.5" x2="1894" y2="581.5" stroke="#e0e0e0" stroke-width="1" />
<line x1="0" y1="581.5" x2="33" y2="581.5" stroke="#d9d9d9" stroke-width="1" />
<line x1="34" y1="605.5" x2="1894" y2="605.5" stroke="#e0e0e0" stroke-width="1" />
<line x1="0" y1="605.5" x2="33" y2="605.5" stroke="#d9d9d9" stroke-width="1" />
<line x1="34" y1="629.5" x2="1894" y2="629.5" stroke="#e0e0e0" stroke-width="1" />
<line x1="0" y1="629.5" x2="33" y2="629.5" stroke="#d9d9d9" stroke-width="1" />
<line x1="34" y1="653.5" x2="1894" y2="653.5" stroke="#e0e0e0" stroke-width="1" />
<line x1="0" y1="653.5" x2="33" y2="653.5" stroke="#d9d9d9" stroke-width="1" />
<line x1="34" y1="677.5" x2="1894" y2="677.5" stroke="#e0e0e0" stroke-width="1" />
<line x1="0" y1="677.5" x2="33" y2="677.5" stroke="#d9d9d9" stroke-width="1" />
<line x1="34" y1="701.5" x2="1894" y2="701.5" stroke="#e0e0e0" stroke-width="1" />
<line x1="0" y1="701.5" x2="33" y2="701.5" stroke="#d9d9d9" stroke-width="1" />
<line x1="34" y1="749.5" x2="1894" y2="749.5" stroke="#e0e0e0" stroke-width="1" />
<line x1="0" y1="749.5" x2="33" y2="749.5" stroke="#d9d9d9" stroke-width="1" />
<line x1="34" y1="773.5" x2="1894" y2="773.5" stroke="#e0e0e0" stroke-width="1" />
<line x1="0" y1="773.5" x2="33" y2="773.5" stroke="#d9d9d9" stroke-width="1" />
<line x1="34" y1="797.5" x2="1894" y2="797.5" stroke="#e0e0e0" stroke-width="1" />
<line x1="0" y1="797.5" x2="33" y2="797.5" stroke="#d9d9d9" stroke-width="1" />
<line x1="34" y1="821.5" x2="1894" y2="821.5" stroke="#e0e0e0" stroke-width="1" />
<line x1="0" y1="821.5" x2="33" y2="821.5" stroke="#d9d9d9" stroke-width="1" />
<line x1="34" y1="845.5" x2="1894" y2="845.5" stroke="#e0e0e0" stroke-width="1" />
<line x1="0" y1="845.5" x2="33" y2="845.5" stroke="#d9d9d9" stroke-width="1" />
<line x1="34" y1="869.5" x2="1894" y2="869.5" stroke="#e0e0e0" stroke-width="1" />
<line x1="0" y1="869.5" x2="33" y2="869.5" stroke="#d9d9d9" stroke-width="1" />
<line x1="34" y1="893.5" x2="1894" y2="893.5" stroke="#e0e0e0" stroke-width="1" />
<line x1="0" y1="893.5" x2="33" y2="893.5" stroke="#d9d9d9" stroke-width="1" />
<line x1="34" y1="917.5" x2="1894" y2="917.5" stroke="#e0e0e0" stroke-width="1" />
<line x1="0" y1="917.5" x2="33" y2="917.5" stroke="#d9d9d9" stroke-width="1" />
<line x1="34" y1="941.5" x2="1894" y2="941.5" stroke="#e0e0e0" stroke-width="1" />
<line x1="0" y1="941.5" x2="33" y2="941.5" stroke="#d9d9d9" stroke-width="1" />
<line x1="34" y1="965.5" x2="1894" y2="965.5" stroke="#e0e0e0" stroke-width="1" />
<line x1="0" y1="965.5" x2="33" y2="965.5" stroke="#d9d9d9" stroke-width="1" />
<line x1="141.5" y1="342" x2="141.5" y2="953" stroke="#e0e0e0" stroke-width="1" />
<line x1="141.5" y1="318" x2="141.5" y2="341" stroke="#d4d4d4" stroke-width="1" />
<line x1="681.5" y1="342" x2="681.5" y2="953" stroke="#e0e0e0" stroke-width="1" />
<line x1="681.5" y1="318" x2="681.5" y2="341" stroke="#d4d4d4" stroke-width="1" />
<line x1="816.5" y1="342" x2="816.5" y2="953" stroke="#e0e0e0" stroke-width="1" />
<line x1="816.5" y1="318" x2="816.5" y2="341" stroke="#d4d4d4" stroke-width="1" />
<line x1="951.5" y1="342" x2="951.5" y2="953" stroke="#e0e0e0" stroke-width="1" />
<line x1="951.5" y1="318" x2="951.5" y2="341" stroke="#d4d4d4" stroke-width="1" />
<line x1="1113.5" y1="342" x2="1113.5" y2="953" stroke="#e0e0e0" stroke-width="1" />
<line x1="1113.5" y1="318" x2="1113.5" y2="341" stroke="#d4d4d4" stroke-width="1" />
<line x1="1383.5" y1="342" x2="1383.5" y2="953" stroke="#e0e0e0" stroke-width="1" />
<line x1="1383.5" y1="318" x2="1383.5" y2="341" stroke="#d4d4d4" stroke-width="1" />
<line x1="1463.5" y1="342" x2="1463.5" y2="953" stroke="#e0e0e0" stroke-width="1" />
<line x1="1463.5" y1="318" x2="1463.5" y2="341" stroke="#d4d4d4" stroke-width="1" />
<line x1="1543.5" y1="342" x2="1543.5" y2="953" stroke="#e0e0e0" stroke-width="1" />
<line x1="1543.5" y1="318" x2="1543.5" y2="341" stroke="#d4d4d4" stroke-width="1" />
<line x1="1623.5" y1="342" x2="1623.5" y2="953" stroke="#e0e0e0" stroke-width="1" />
<line x1="1623.5" y1="318" x2="1623.5" y2="341" stroke="#d4d4d4" stroke-width="1" />
<line x1="1703.5" y1="342" x2="1703.5" y2="953" stroke="#e0e0e0" stroke-width="1" />
<line x1="1703.5" y1="318" x2="1703.5" y2="341" stroke="#d4d4d4" stroke-width="1" />
<line x1="1783.5" y1="342" x2="1783.5" y2="953" stroke="#e0e0e0" stroke-width="1" />
<line x1="1783.5" y1="318" x2="1783.5" y2="341" stroke="#d4d4d4" stroke-width="1" />
<line x1="1863.5" y1="342" x2="1863.5" y2="953" stroke="#e0e0e0" stroke-width="1" />
<line x1="1863.5" y1="318" x2="1863.5" y2="341" stroke="#d4d4d4" stroke-width="1" />
<rect x="34" y="342" width="1350" height="24" fill="#1f4e78" />
<rect x="34" y="366" width="108" height="24" fill="#ff0000" />
<rect x="34" y="390" width="108" height="24" fill="#ff0000" />
<rect x="34" y="414" width="108" height="24" fill="#ff0000" />
<rect x="34" y="438" width="108" height="24" fill="#ff0000" />
<rect x="34" y="462" width="108" height="24" fill="#ff0000" />
<rect x="34" y="486" width="108" height="24" fill="#ff0000" />
<rect x="34" y="510" width="108" height="24" fill="#ff0000" />
<rect x="34" y="534" width="108" height="24" fill="#ff0000" />
<rect x="34" y="558" width="108" height="24" fill="#ff0000" />
<rect x="34" y="582" width="108" height="24" fill="#ff0000" />
<rect x="34" y="606" width="108" height="24" fill="#ff0000" />
<rect x="34" y="630" width="108" height="24" fill="#ff0000" />
<rect x="34" y="654" width="108" height="24" fill="#ff0000" />
<rect x="34" y="678" width="108" height="24" fill="#ff0000" />
<rect x="34" y="702" width="108" height="48" fill="#ff0000" />
<rect x="34" y="750" width="108" height="24" fill="#ff0000" />
<rect x="34" y="798" width="108" height="24" fill="#ffa500" />
<rect x="34" y="822" width="108" height="24" fill="#ffa500" />
<rect x="34" y="846" width="108" height="24" fill="#ffa500" />
<rect x="34" y="870" width="108" height="24" fill="#ffa500" />
<rect x="34" y="894" width="108" height="24" fill="#ffa500" />
<rect x="34" y="918" width="108" height="24" fill="#ffa500" />
<rect x="34" y="942" width="108" height="24" fill="#ffa500" />
<line x1="0" y1="341.5" x2="1894" y2="341.5" stroke="#b8b8b8" stroke-width="1" />
<line x1="33.5" y1="318" x2="33.5" y2="953" stroke="#c4c4c4" stroke-width="1" />
<rect x="1113" y="340" width="271" height="2" fill="#1e7145" />
<rect x="32" y="750" width="2" height="24" fill="#107c41" />
<path d="M30 322 L30 338 L15 338 Z" stroke="none" fill="#d8d8d8" stroke-width="1" />
<text x="82.5" y="336" font-size="15.0" fill="#444444" textLength="9.96" lengthAdjust="spacingAndGlyphs" >A</text>
<text x="407.0" y="336" font-size="15.0" fill="#444444" textLength="9.03" lengthAdjust="spacingAndGlyphs" >B</text>
<text x="744.0" y="336" font-size="15.0" fill="#444444" textLength="10.03" lengthAdjust="spacingAndGlyphs" >C</text>
<text x="879.0" y="336" font-size="15.0" fill="#444444" textLength="10.03" lengthAdjust="spacingAndGlyphs" >D</text>
<text x="1028.75" y="336" font-size="15.0" fill="#444444" textLength="7.52" lengthAdjust="spacingAndGlyphs" >E</text>
<text x="1245.0" y="336" font-size="15.0" fill="#1e7145" textLength="7.01" lengthAdjust="spacingAndGlyphs" >F</text>
<text x="1418.0" y="336" font-size="15.0" fill="#444444" textLength="10.97" lengthAdjust="spacingAndGlyphs" >G</text>
<text x="1498.0" y="336" font-size="15.0" fill="#444444" textLength="11.03" lengthAdjust="spacingAndGlyphs" >H</text>
<text x="1582.0" y="336" font-size="15.0" fill="#444444" textLength="2.98" lengthAdjust="spacingAndGlyphs" >I</text>
<text x="1660.5" y="336" font-size="15.0" fill="#444444" textLength="6.0" lengthAdjust="spacingAndGlyphs" >J</text>
<text x="1739.0" y="336" font-size="15.0" fill="#444444" textLength="9.03" lengthAdjust="spacingAndGlyphs" >K</text>
<text x="1819.5" y="336" font-size="15.0" fill="#444444" textLength="8.02" lengthAdjust="spacingAndGlyphs" >L</text>
<text x="14.2" y="360" font-size="15.4" fill="#444444" textLength="6.01" lengthAdjust="spacingAndGlyphs" >1</text>
<text x="13.2" y="384" font-size="15.4" fill="#444444" textLength="8.02" lengthAdjust="spacingAndGlyphs" >2</text>
<text x="13.2" y="408" font-size="15.4" fill="#444444" textLength="8.02" lengthAdjust="spacingAndGlyphs" >3</text>
<text x="13.2" y="432" font-size="15.4" fill="#444444" textLength="8.02" lengthAdjust="spacingAndGlyphs" >4</text>
<text x="13.2" y="456" font-size="15.4" fill="#444444" textLength="8.02" lengthAdjust="spacingAndGlyphs" >5</text>
<text x="13.2" y="480" font-size="15.4" fill="#444444" textLength="8.02" lengthAdjust="spacingAndGlyphs" >6</text>
<text x="13.2" y="504" font-size="15.4" fill="#444444" textLength="8.02" lengthAdjust="spacingAndGlyphs" >7</text>
<text x="13.2" y="528" font-size="15.4" fill="#444444" textLength="8.02" lengthAdjust="spacingAndGlyphs" >8</text>
<text x="13.2" y="552" font-size="15.4" fill="#444444" textLength="8.02" lengthAdjust="spacingAndGlyphs" >9</text>
<text x="8.7" y="576" font-size="15.4" fill="#444444" textLength="17.04" lengthAdjust="spacingAndGlyphs" >10</text>
<text x="8.7" y="600" font-size="15.4" fill="#444444" textLength="16.97" lengthAdjust="spacingAndGlyphs" >11</text>
<text x="8.7" y="624" font-size="15.4" fill="#444444" textLength="17.04" lengthAdjust="spacingAndGlyphs" >12</text>
<text x="8.7" y="648" font-size="15.4" fill="#444444" textLength="17.04" lengthAdjust="spacingAndGlyphs" >13</text>
<text x="8.7" y="672" font-size="15.4" fill="#444444" textLength="17.04" lengthAdjust="spacingAndGlyphs" >14</text>
<text x="8.7" y="696" font-size="15.4" fill="#444444" textLength="17.04" lengthAdjust="spacingAndGlyphs" >15</text>
<text x="8.7" y="744" font-size="15.4" fill="#444444" textLength="17.04" lengthAdjust="spacingAndGlyphs" >16</text>
<text x="8.7" y="768" font-size="15.4" fill="#1e7145" textLength="17.04" lengthAdjust="spacingAndGlyphs" >17</text>
<text x="8.7" y="792" font-size="15.4" fill="#444444" textLength="17.04" lengthAdjust="spacingAndGlyphs" >18</text>
<text x="8.7" y="816" font-size="15.4" fill="#444444" textLength="17.04" lengthAdjust="spacingAndGlyphs" >19</text>
<text x="8.7" y="840" font-size="15.4" fill="#444444" textLength="17.04" lengthAdjust="spacingAndGlyphs" >20</text>
<text x="8.7" y="864" font-size="15.4" fill="#444444" textLength="17.04" lengthAdjust="spacingAndGlyphs" >21</text>
<text x="8.7" y="888" font-size="15.4" fill="#444444" textLength="17.04" lengthAdjust="spacingAndGlyphs" >22</text>
<text x="8.7" y="912" font-size="15.4" fill="#444444" textLength="17.04" lengthAdjust="spacingAndGlyphs" >23</text>
<text x="8.7" y="936" font-size="15.4" fill="#444444" textLength="17.04" lengthAdjust="spacingAndGlyphs" >24</text>
<text x="8.7" y="960" font-size="15.4" fill="#444444" textLength="17.04" lengthAdjust="spacingAndGlyphs" >25</text>
<text x="52.8" y="360" font-size="15.5" fill="#ffffff" font-weight="700" textLength="68.47" lengthAdjust="spacingAndGlyphs" >PRIORITÉ</text>
<text x="351.0" y="360" font-size="15.5" fill="#ffffff" font-weight="700" textLength="120.41" lengthAdjust="spacingAndGlyphs" >ACTION À FAIRE</text>
<text x="692.5" y="360" font-size="15.5" fill="#ffffff" font-weight="700" textLength="113.01" lengthAdjust="spacingAndGlyphs" >TEMPS ESTIMÉ</text>
<text x="854.2" y="360" font-size="15.5" fill="#ffffff" font-weight="700" textLength="58.61" lengthAdjust="spacingAndGlyphs" >STATUT</text>
<text x="960.3" y="360" font-size="15.5" fill="#ffffff" font-weight="700" textLength="143.99" lengthAdjust="spacingAndGlyphs" >DATE RÉALISATION</text>
<text x="1223.3" y="360" font-size="15.5" fill="#ffffff" font-weight="700" textLength="50.5" lengthAdjust="spacingAndGlyphs" >NOTES</text>
<text x="37.0" y="408" font-size="14.4" fill="#ffffff" font-weight="700" textLength="46.97" lengthAdjust="spacingAndGlyphs" >S-TIER</text>
<text x="145.3" y="408" font-size="14.4" fill="#000000" textLength="485.74" lengthAdjust="spacingAndGlyphs" >Vérifier et corriger le nom de l&#x27;entreprise (sans mots-clés excessifs)</text>
<text x="685.5" y="408" font-size="14.4" fill="#000000" textLength="39.92" lengthAdjust="spacingAndGlyphs" >5 min</text>
<rect x="823.5" y="393" width="17" height="17" fill="none" rx="3.5" stroke="#000000" stroke-width="2.2" />
<path d="M827.0 401.5 L830.5 405 L837.0 397.5" stroke="#000000" fill="none" stroke-width="1.8" stroke-linecap="round" stroke-linejoin="round"/>
<text x="849.6" y="408" font-size="14.4" fill="#000000" textLength="30.92" lengthAdjust="spacingAndGlyphs" >FAIT</text>
<text x="37.0" y="432" font-size="14.4" fill="#ffffff" font-weight="700" textLength="46.97" lengthAdjust="spacingAndGlyphs" >S-TIER</text>
<text x="145.3" y="432" font-size="14.4" fill="#000000" textLength="423.69" lengthAdjust="spacingAndGlyphs" >Sélectionner une catégorie principale précise et pertinente</text>
<text x="685.5" y="432" font-size="14.4" fill="#000000" textLength="39.92" lengthAdjust="spacingAndGlyphs" >5 min</text>
<rect x="823.5" y="417" width="17" height="17" fill="none" rx="3.5" stroke="#000000" stroke-width="2.2" />
<path d="M827.0 425.5 L830.5 429 L837.0 421.5" stroke="#000000" fill="none" stroke-width="1.8" stroke-linecap="round" stroke-linejoin="round"/>
<text x="849.6" y="432" font-size="14.4" fill="#000000" textLength="30.92" lengthAdjust="spacingAndGlyphs" >FAIT</text>
<text x="37.0" y="456" font-size="14.4" fill="#ffffff" font-weight="700" textLength="46.97" lengthAdjust="spacingAndGlyphs" >S-TIER</text>
<text x="145.3" y="456" font-size="14.4" fill="#000000" textLength="346.68" lengthAdjust="spacingAndGlyphs" >Compléter l&#x27;adresse exacte avec tous les détails</text>
<text x="685.5" y="456" font-size="14.4" fill="#000000" textLength="39.92" lengthAdjust="spacingAndGlyphs" >3 min</text>
<rect x="823.5" y="441" width="17" height="17" fill="none" rx="3.5" stroke="#000000" stroke-width="2.2" />
<path d="M827.0 449.5 L830.5 453 L837.0 445.5" stroke="#000000" fill="none" stroke-width="1.8" stroke-linecap="round" stroke-linejoin="round"/>
<text x="849.6" y="456" font-size="14.4" fill="#000000" textLength="30.92" lengthAdjust="spacingAndGlyphs" >FAIT</text>
<text x="37.0" y="480" font-size="14.4" fill="#ffffff" font-weight="700" textLength="46.97" lengthAdjust="spacingAndGlyphs" >S-TIER</text>
<text x="145.3" y="480" font-size="14.4" fill="#000000" textLength="311.7" lengthAdjust="spacingAndGlyphs" >Ajouter un numéro de téléphone local actif</text>
<text x="685.5" y="480" font-size="14.4" fill="#000000" textLength="39.92" lengthAdjust="spacingAndGlyphs" >2 min</text>
<text x="820.4" y="480" font-size="14.4" fill="#000000" textLength="54.39" lengthAdjust="spacingAndGlyphs" >À FAIRE</text>
<text x="37.0" y="504" font-size="14.4" fill="#ffffff" font-weight="700" textLength="46.97" lengthAdjust="spacingAndGlyphs" >S-TIER</text>
<text x="145.3" y="504" font-size="14.4" fill="#000000" textLength="446.17" lengthAdjust="spacingAndGlyphs" >Remplir les horaires d&#x27;ouverture complets (7 jours + spéciaux)</text>
<text x="685.5" y="504" font-size="14.4" fill="#000000" textLength="49.0" lengthAdjust="spacingAndGlyphs" >10 min</text>
<rect x="823.5" y="489" width="17" height="17" fill="none" rx="3.5" stroke="#000000" stroke-width="2.2" />
<path d="M827.0 497.5 L830.5 501 L837.0 493.5" stroke="#000000" fill="none" stroke-width="1.8" stroke-linecap="round" stroke-linejoin="round"/>
<text x="849.6" y="504" font-size="14.4" fill="#000000" textLength="30.92" lengthAdjust="spacingAndGlyphs" >FAIT</text>
<text x="37.0" y="528" font-size="14.4" fill="#ffffff" font-weight="700" textLength="46.97" lengthAdjust="spacingAndGlyphs" >S-TIER</text>
<text x="145.3" y="528" font-size="14.4" fill="#000000" textLength="406.66" lengthAdjust="spacingAndGlyphs" >Ajouter une photo de profil professionnelle (720x720px)</text>
<text x="685.5" y="528" font-size="14.4" fill="#000000" textLength="49.0" lengthAdjust="spacingAndGlyphs" >10 min</text>
<rect x="823.5" y="513" width="17" height="17" fill="none" rx="3.5" stroke="#000000" stroke-width="2.2" />
<path d="M827.0 521.5 L830.5 525 L837.0 517.5" stroke="#000000" fill="none" stroke-width="1.8" stroke-linecap="round" stroke-linejoin="round"/>
<text x="849.6" y="528" font-size="14.4" fill="#000000" textLength="30.92" lengthAdjust="spacingAndGlyphs" >FAIT</text>
<text x="37.0" y="552" font-size="14.4" fill="#ffffff" font-weight="700" textLength="46.97" lengthAdjust="spacingAndGlyphs" >S-TIER</text>
<text x="145.3" y="552" font-size="14.4" fill="#000000" textLength="394.73" lengthAdjust="spacingAndGlyphs" >Ajouter une photo de couverture (façade 1024x576px)</text>
<text x="685.5" y="552" font-size="14.4" fill="#000000" textLength="49.0" lengthAdjust="spacingAndGlyphs" >10 min</text>
<rect x="823.5" y="537" width="17" height="17" fill="none" rx="3.5" stroke="#000000" stroke-width="2.2" />
<path d="M827.0 545.5 L830.5 549 L837.0 541.5" stroke="#000000" fill="none" stroke-width="1.8" stroke-linecap="round" stroke-linejoin="round"/>
<text x="849.6" y="552" font-size="14.4" fill="#000000" textLength="30.92" lengthAdjust="spacingAndGlyphs" >FAIT</text>
<text x="37.0" y="576" font-size="14.4" fill="#ffffff" font-weight="700" textLength="46.97" lengthAdjust="spacingAndGlyphs" >S-TIER</text>
<text x="145.3" y="576" font-size="14.4" fill="#000000" textLength="285.22" lengthAdjust="spacingAndGlyphs" >Obtenir au moins 25 avis Google clients</text>
<text x="685.5" y="576" font-size="14.4" fill="#000000" textLength="58.07" lengthAdjust="spacingAndGlyphs" >30 jours</text>
<text x="820.4" y="576" font-size="14.4" fill="#000000" textLength="54.39" lengthAdjust="spacingAndGlyphs" >À FAIRE</text>
<text x="37.0" y="600" font-size="14.4" fill="#ffffff" font-weight="700" textLength="46.97" lengthAdjust="spacingAndGlyphs" >S-TIER</text>
<text x="145.3" y="600" font-size="14.4" fill="#000000" textLength="366.28" lengthAdjust="spacingAndGlyphs" >Atteindre une note moyenne de 4.0 étoiles ou plus</text>
<text x="685.5" y="600" font-size="14.4" fill="#000000" textLength="58.07" lengthAdjust="spacingAndGlyphs" >60 jours</text>
<text x="820.4" y="600" font-size="14.4" fill="#000000" textLength="54.39" lengthAdjust="spacingAndGlyphs" >À FAIRE</text>
<text x="37.0" y="624" font-size="14.4" fill="#ffffff" font-weight="700" textLength="46.97" lengthAdjust="spacingAndGlyphs" >S-TIER</text>
<text x="145.3" y="624" font-size="14.4" fill="#000000" textLength="336.72" lengthAdjust="spacingAndGlyphs" >Répondre à 100% des avis (positifs et négatifs)</text>
<text x="685.5" y="624" font-size="14.4" fill="#000000" textLength="49.0" lengthAdjust="spacingAndGlyphs" >20 min</text>
<rect x="823.5" y="609" width="17" height="17" fill="none" rx="3.5" stroke="#000000" stroke-width="2.2" />
<path d="M827.0 617.5 L830.5 621 L837.0 613.5" stroke="#000000" fill="none" stroke-width="1.8" stroke-linecap="round" stroke-linejoin="round"/>
<text x="849.6" y="624" font-size="14.4" fill="#000000" textLength="30.92" lengthAdjust="spacingAndGlyphs" >FAIT</text>
<text x="37.0" y="648" font-size="14.4" fill="#ffffff" font-weight="700" textLength="46.97" lengthAdjust="spacingAndGlyphs" >S-TIER</text>
<text x="145.3" y="648" font-size="14.4" fill="#000000" textLength="153.71" lengthAdjust="spacingAndGlyphs" >Création de backlinks</text>
<text x="685.5" y="648" font-size="14.4" fill="#000000" textLength="58.07" lengthAdjust="spacingAndGlyphs" >15 jours</text>
<rect x="823.5" y="633" width="17" height="17" fill="none" rx="3.5" stroke="#000000" stroke-width="2.2" />
<path d="M827.0 641.5 L830.5 645 L837.0 637.5" stroke="#000000" fill="none" stroke-width="1.8" stroke-linecap="round" stroke-linejoin="round"/>
<text x="849.6" y="648" font-size="14.4" fill="#000000" textLength="30.92" lengthAdjust="spacingAndGlyphs" >FAIT</text>
<text x="37.0" y="672" font-size="14.4" fill="#ffffff" font-weight="700" textLength="46.97" lengthAdjust="spacingAndGlyphs" >S-TIER</text>
<text x="145.3" y="672" font-size="14.4" fill="#000000" textLength="29.71" lengthAdjust="spacingAndGlyphs" >FAQ</text>
<text x="685.5" y="672" font-size="14.4" fill="#000000" textLength="49.0" lengthAdjust="spacingAndGlyphs" >60 min</text>
<rect x="823.5" y="657" width="17" height="17" fill="none" rx="3.5" stroke="#000000" stroke-width="2.2" />
<path d="M827.0 665.5 L830.5 669 L837.0 661.5" stroke="#000000" fill="none" stroke-width="1.8" stroke-linecap="round" stroke-linejoin="round"/>
<text x="849.6" y="672" font-size="14.4" fill="#000000" textLength="30.92" lengthAdjust="spacingAndGlyphs" >FAIT</text>
<text x="37.0" y="696" font-size="14.4" fill="#ffffff" font-weight="700" textLength="46.97" lengthAdjust="spacingAndGlyphs" >S-TIER</text>
<text x="145.3" y="696" font-size="14.4" fill="#000000" textLength="270.71" lengthAdjust="spacingAndGlyphs" >Création de points de citation Google</text>
<text x="685.5" y="696" font-size="14.4" fill="#000000" textLength="58.07" lengthAdjust="spacingAndGlyphs" >10 jours</text>
<text x="820.4" y="696" font-size="14.4" fill="#000000" textLength="54.39" lengthAdjust="spacingAndGlyphs" >À FAIRE</text>
<text x="37.0" y="744" font-size="14.4" fill="#ffffff" font-weight="700" textLength="46.97" lengthAdjust="spacingAndGlyphs" >S-TIER</text>
<text x="145.3" y="720" font-size="14.4" fill="#000000" textLength="491.1" lengthAdjust="spacingAndGlyphs" >Recherche de 100 mots-clés pertinents et spécifiques aux domaines</text>
<text x="145.3" y="744" font-size="14.4" fill="#000000" textLength="73.44" lengthAdjust="spacingAndGlyphs" >d&#x27;activités</text>
<text x="685.5" y="744" font-size="14.4" fill="#000000" textLength="40.83" lengthAdjust="spacingAndGlyphs" >1 jour</text>
<text x="820.4" y="744" font-size="14.4" fill="#000000" textLength="54.39" lengthAdjust="spacingAndGlyphs" >À FAIRE</text>
<text x="37.0" y="768" font-size="14.4" fill="#ffffff" font-weight="700" textLength="46.97" lengthAdjust="spacingAndGlyphs" >S-TIER</text>
<text x="145.3" y="768" font-size="14.4" fill="#000000" textLength="425.68" lengthAdjust="spacingAndGlyphs" >Vérifier cohérence NAP (Nom/Adresse/Téléphone) partout</text>
<text x="685.5" y="768" font-size="14.4" fill="#000000" textLength="49.0" lengthAdjust="spacingAndGlyphs" >30 min</text>
<rect x="823.5" y="753" width="17" height="17" fill="none" rx="3.5" stroke="#000000" stroke-width="2.2" />
<path d="M827.0 761.5 L830.5 765 L837.0 757.5" stroke="#000000" fill="none" stroke-width="1.8" stroke-linecap="round" stroke-linejoin="round"/>
<text x="849.6" y="768" font-size="14.4" fill="#000000" textLength="30.92" lengthAdjust="spacingAndGlyphs" >FAIT</text>
<text x="37.5" y="816" font-size="14.4" fill="#000000" font-weight="700" textLength="49.27" lengthAdjust="spacingAndGlyphs" >A-TIER</text>
<text x="145.3" y="816" font-size="14.4" fill="#000000" textLength="345.29" lengthAdjust="spacingAndGlyphs" >Ajouter 3-5 catégories secondaires stratégiques</text>
<text x="685.5" y="816" font-size="14.4" fill="#000000" textLength="49.0" lengthAdjust="spacingAndGlyphs" >15 min</text>
<text x="820.4" y="816" font-size="14.4" fill="#000000" textLength="54.39" lengthAdjust="spacingAndGlyphs" >À FAIRE</text>
<text x="37.5" y="840" font-size="14.4" fill="#000000" font-weight="700" textLength="49.27" lengthAdjust="spacingAndGlyphs" >A-TIER</text>
<text x="145.3" y="840" font-size="14.4" fill="#000000" textLength="237.38" lengthAdjust="spacingAndGlyphs" >Ajouter l&#x27;URL du site web officiel</text>
<text x="685.5" y="840" font-size="14.4" fill="#000000" textLength="39.92" lengthAdjust="spacingAndGlyphs" >2 min</text>
<rect x="823.5" y="825" width="17" height="17" fill="none" rx="3.5" stroke="#000000" stroke-width="2.2" />
<path d="M827.0 833.5 L830.5 837 L837.0 829.5" stroke="#000000" fill="none" stroke-width="1.8" stroke-linecap="round" stroke-linejoin="round"/>
<text x="849.6" y="840" font-size="14.4" fill="#000000" textLength="30.92" lengthAdjust="spacingAndGlyphs" >FAIT</text>
<text x="37.5" y="864" font-size="14.4" fill="#000000" font-weight="700" textLength="49.27" lengthAdjust="spacingAndGlyphs" >A-TIER</text>
<text x="145.3" y="864" font-size="14.4" fill="#000000" textLength="374.37" lengthAdjust="spacingAndGlyphs" >Créer description courte optimisée (250 caractères)</text>
<text x="685.5" y="864" font-size="14.4" fill="#000000" textLength="49.0" lengthAdjust="spacingAndGlyphs" >15 min</text>
<rect x="823.5" y="849" width="17" height="17" fill="none" rx="3.5" stroke="#000000" stroke-width="2.2" />
<path d="M827.0 857.5 L830.5 861 L837.0 853.5" stroke="#000000" fill="none" stroke-width="1.8" stroke-linecap="round" stroke-linejoin="round"/>
<text x="849.6" y="864" font-size="14.4" fill="#000000" textLength="30.92" lengthAdjust="spacingAndGlyphs" >FAIT</text>
<text x="37.5" y="888" font-size="14.4" fill="#000000" font-weight="700" textLength="49.27" lengthAdjust="spacingAndGlyphs" >A-TIER</text>
<text x="145.3" y="888" font-size="14.4" fill="#000000" textLength="362.24" lengthAdjust="spacingAndGlyphs" >Ajouter 5+ photos de l&#x27;intérieur de l&#x27;établissement</text>
<text x="685.5" y="888" font-size="14.4" fill="#000000" textLength="49.0" lengthAdjust="spacingAndGlyphs" >20 min</text>
<text x="820.4" y="888" font-size="14.4" fill="#000000" textLength="54.39" lengthAdjust="spacingAndGlyphs" >À FAIRE</text>
<text x="37.5" y="912" font-size="14.4" fill="#000000" font-weight="700" textLength="49.27" lengthAdjust="spacingAndGlyphs" >A-TIER</text>
<text x="145.3" y="912" font-size="14.4" fill="#000000" textLength="285.23" lengthAdjust="spacingAndGlyphs" >Ajouter 3+ photos de l&#x27;équipe au travail</text>
<text x="685.5" y="912" font-size="14.4" fill="#000000" textLength="49.0" lengthAdjust="spacingAndGlyphs" >15 min</text>
<text x="820.4" y="912" font-size="14.4" fill="#000000" textLength="54.39" lengthAdjust="spacingAndGlyphs" >À FAIRE</text>
<text x="37.5" y="936" font-size="14.4" fill="#000000" font-weight="700" textLength="49.27" lengthAdjust="spacingAndGlyphs" >A-TIER</text>
<text x="145.3" y="936" font-size="14.4" fill="#000000" textLength="290.19" lengthAdjust="spacingAndGlyphs" >Ajouter 10+ photos de produits/services</text>
<text x="685.5" y="936" font-size="14.4" fill="#000000" textLength="49.0" lengthAdjust="spacingAndGlyphs" >30 min</text>
<text x="820.4" y="936" font-size="14.4" fill="#000000" textLength="54.39" lengthAdjust="spacingAndGlyphs" >À FAIRE</text>
<text x="37.5" y="960" font-size="14.4" fill="#000000" font-weight="700" textLength="49.27" lengthAdjust="spacingAndGlyphs" >A-TIER</text>
<text x="145.3" y="960" font-size="14.4" fill="#000000" textLength="355.68" lengthAdjust="spacingAndGlyphs" >Obtenir au moins 3 avis dans les 30 derniers jours</text>
<text x="685.5" y="960" font-size="14.4" fill="#000000" textLength="58.07" lengthAdjust="spacingAndGlyphs" >15 jours</text>
<text x="820.4" y="960" font-size="14.4" fill="#000000" textLength="54.39" lengthAdjust="spacingAndGlyphs" >À FAIRE</text>
<rect x="1113" y="749" width="272" height="2" fill="#107c41" />
<rect x="1112" y="748" width="2" height="27" fill="#107c41" />
<rect x="1112" y="773" width="270" height="2" fill="#107c41" />
<rect x="1383" y="748" width="2" height="23" fill="#107c41" />
<rect x="1381" y="771" width="5" height="5" fill="#107c41" />
<rect x="1897" y="318" width="21" height="638" fill="#f3f3f3" rx="10" />
<path d="M1907.5 324 L1913 332 L1902 332 Z" stroke="none" fill="#707070" stroke-width="1" stroke="#707070" stroke-width="1" stroke-linejoin="round"/>
<rect x="1902" y="339" width="11" height="485" fill="#707070" rx="5.5" />
<path d="M1902 941 L1913 941 L1907.5 949 Z" stroke="none" fill="#707070" stroke-width="1" stroke="#707070" stroke-width="1" stroke-linejoin="round"/>
<rect x="0" y="953" width="1920" height="40" fill="#e6edf0" />
<line x1="0" y1="953.5" x2="1894" y2="953.5" stroke="#d4d4d4" stroke-width="1" />
<path d="M413.5 953.5 V982 Q413.5 988.5 420 988.5 H542 Q548.5 988.5 548.5 982 V953.5" stroke="#d9dcde" fill="#ffffff" stroke-width="1" />
<rect x="414" y="953" width="134" height="2" fill="#ffffff" />
<path d="M38.5 966 L32 972 L38.5 978" stroke="#8a8a8a" fill="none" stroke-width="1.2" />
<path d="M73 966 L79.5 972 L73 978" stroke="#8a8a8a" fill="none" stroke-width="1.2" />
<text x="153.0" y="979.8" font-size="17.0" fill="#242424" textLength="131.41" lengthAdjust="spacingAndGlyphs" >AUDIT_COMPLET</text>
<line x1="302.5" y1="962" x2="302.5" y2="984" stroke="#c8c8c8" stroke-width="1" />
<text x="318.0" y="979.8" font-size="17.0" fill="#242424" textLength="72.83" lengthAdjust="spacingAndGlyphs" >SCORING</text>
<line x1="408.5" y1="962" x2="408.5" y2="984" stroke="#c8c8c8" stroke-width="1" />
<text x="424.4" y="975.8" font-size="17.3" fill="#242424" textLength="113.72" lengthAdjust="spacingAndGlyphs" stroke="#242424" stroke-width="0.35">PLAN_ACTION</text>
<rect x="424" y="983" width="114" height="2.2" fill="#107c41" />
<line x1="554.5" y1="962" x2="554.5" y2="984" stroke="#c8c8c8" stroke-width="1" />
<text x="572.9" y="979.8" font-size="17.0" fill="#242424" textLength="155.92" lengthAdjust="spacingAndGlyphs" >GUIDE_UTILISATION</text>
<line x1="747.5" y1="962" x2="747.5" y2="984" stroke="#c8c8c8" stroke-width="1" />
<text x="764.2" y="979.8" font-size="17.0" fill="#242424" textLength="101.62" lengthAdjust="spacingAndGlyphs" >RESSOURCES</text>
<line x1="883.5" y1="962" x2="883.5" y2="984" stroke="#c8c8c8" stroke-width="1" />
<path d="M943 965.5 V979.5 M936 972.5 H950" stroke="#242424" fill="none" stroke-width="1.5" />
<circle cx="1156" cy="967.5" r="1.4" fill="#424242"/>
<circle cx="1156" cy="972.5" r="1.4" fill="#424242"/>
<circle cx="1156" cy="977.5" r="1.4" fill="#424242"/>
<rect x="1177.5" y="962" width="719" height="21" fill="#f3f3f3" rx="10.5" />
<path d="M1190.5 967.5 L1183.5 972.5 L1190.5 977.5 Z" stroke="none" fill="#707070" stroke-width="1" stroke="#707070" stroke-linejoin="round"/>
<rect x="1197" y="966.5" width="660" height="11" fill="#707070" rx="5.5" />
<path d="M1882.5 967 L1889 972.3 L1882.5 977.5 Z" stroke="none" fill="#707070" stroke-width="1" stroke="#707070" stroke-linejoin="round"/>
<rect x="0" y="993" width="1920" height="27" fill="#f3f3f3" />
<line x1="0" y1="993.5" x2="1920" y2="993.5" stroke="#ffffff" stroke-width="1" />
<text x="14.5" y="1011.5" font-size="13.0" fill="#242424" textLength="22.49" lengthAdjust="spacingAndGlyphs" >Prêt</text>
<rect x="64" y="1000.5" width="16" height="14" fill="none" stroke="#333333" stroke-width="1.5" />
<line x1="64" y1="1003.8" x2="80" y2="1003.8" stroke="#333333" stroke-width="1.3" />
<line x1="66.5" y1="1006.5" x2="69" y2="1006.5" stroke="#555" stroke-width="1.1" />
<line x1="66.5" y1="1009.5" x2="68.5" y2="1009.5" stroke="#555" stroke-width="1.1" />
<line x1="66.5" y1="1012.5" x2="68.5" y2="1012.5" stroke="#555" stroke-width="1.1" />
<circle cx="75.5" cy="1010" r="5" fill="#f3f3f3" stroke="#333333" stroke-width="1.5"/><circle cx="75.5" cy="1010" r="2" fill="#333333"/>
<circle cx="111" cy="1000.3" r="1.9" fill="none" stroke="#333333" stroke-width="1.3"/>
<path d="M104.5 1003 C106 1005 108.5 1004.5 111 1004.5 C113.5 1004.5 116 1005 117.5 1003 M109.5 1005 C110 1009 108.5 1012 106.5 1015.5 M112.5 1005 C112 1008 113 1010 114 1012 M113 1011 L120 1015.5 M120 1008.5 L113.5 1015.5" stroke="#333333" fill="none" stroke-width="1.2" />
<text x="125.0" y="1011.5" font-size="14.0" fill="#242424" font-weight="700" textLength="286.52" lengthAdjust="spacingAndGlyphs" >Accessibilité : consultez nos recommandations</text>
<rect x="1542.5" y="994" width="50" height="26" fill="#e0e0e0" />
<rect x="1559.5" y="999.5" width="17" height="15" fill="none" stroke="#424242" stroke-width="1.2" />
<line x1="1565.2" y1="999.5" x2="1565.2" y2="1014.5" stroke="#424242" stroke-width="1" />
<line x1="1570.8" y1="999.5" x2="1570.8" y2="1014.5" stroke="#424242" stroke-width="1" />
<line x1="1559.5" y1="1004.5" x2="1576.5" y2="1004.5" stroke="#424242" stroke-width="1" />
<line x1="1559.5" y1="1009.5" x2="1576.5" y2="1009.5" stroke="#424242" stroke-width="1" />
<rect x="1609.5" y="999.5" width="17" height="15" fill="none" rx="1" stroke="#424242" stroke-width="1.2" />
<rect x="1613" y="1002.5" width="10" height="9" fill="none" stroke="#424242" stroke-width="1" />
<line x1="1615" y1="1005.5" x2="1621" y2="1005.5" stroke="#424242" stroke-width="1" />
<line x1="1615" y1="1008.5" x2="1621" y2="1008.5" stroke="#424242" stroke-width="1" />
<rect x="1659.5" y="999.5" width="17" height="15" fill="none" stroke="#424242" stroke-width="1.2" />
<path d="M1663.5 999.5 V1006.5 H1672.5 V999.5" stroke="#424242" fill="none" stroke-width="1.2" />
<line x1="1700" y1="1006.5" x2="1709" y2="1006.5" stroke="#424242" stroke-width="1.2" />
<line x1="1716" y1="1006.5" x2="1841" y2="1006.5" stroke="#8a8a8a" stroke-width="1" />
<rect x="1776" y="999" width="6" height="15" fill="#424242" rx="1" />
<path d="M1847.5 1006.5 H1856.5 M1852 1002 V1011" stroke="#424242" fill="none" stroke-width="1.2" />
<text x="1873.5" y="1011.5" font-size="13.0" fill="#242424" textLength="35.01" lengthAdjust="spacingAndGlyphs" >100 %</text>
<rect x="0" y="1020" width="1920" height="60" fill="#1c1c1c" />
<path d="M35 1034 C30 1036 29 1044 34 1047 C37 1049 42 1048 44 1045 C39 1045 35 1041 35 1034 Z" stroke="none" fill="#f2a93b" stroke-width="1" />
<ellipse cx="41" cy="1056" rx="14" ry="7" fill="#b9d3f3"/><circle cx="37" cy="1051" r="6" fill="#cfe0f7"/><circle cx="46" cy="1050" r="5" fill="#cfe0f7"/>
<text x="64.7" y="1045" font-size="14.0" fill="#ffffff" textLength="28.99" lengthAdjust="spacingAndGlyphs" >12°C</text>
<text x="64.7" y="1065" font-size="14.0" fill="#d0d0d0" textLength="79.0" lengthAdjust="spacingAndGlyphs" >Ciel couvert</text>
<rect x="613" y="1036" width="14" height="14" fill="#3bb2f2" rx="1.5" />
<rect x="628" y="1036" width="14" height="14" fill="#3bb2f2" rx="1.5" />
<rect x="613" y="1051" width="14" height="14" fill="#3bb2f2" rx="1.5" />
<rect x="628" y="1051" width="14" height="14" fill="#3bb2f2" rx="1.5" />
<rect x="613" y="1036" width="14" height="14" fill="#63c7f7" rx="1.5" />
<rect x="660" y="1031" width="273" height="38" fill="#f0f0f0" rx="19" />
<circle cx="681.5" cy="1048.5" r="6.5" fill="none" stroke="#2a2a2a" stroke-width="2"/>
<line x1="686.5" y1="1053.5" x2="691" y2="1058" stroke="#2a2a2a" stroke-width="2.2" />
<text x="706.25" y="1057.3" font-size="15.5" fill="#5a5a5a" textLength="84.34" lengthAdjust="spacingAndGlyphs" >Rechercher</text>
<path d="M949 1038 H958 L961 1041 H979 V1063 H949 Z" stroke="none" fill="#f9c73e" stroke-width="1" />
<rect x="949" y="1042" width="30" height="21" fill="#fbd34c" />
<rect x="955" y="1056" width="18" height="8" fill="#1e7dd8" rx="2" />
<rect x="960" y="1070" width="8" height="3.5" fill="#9a9a9a" rx="1.7" />
<circle cx="1015" cy="1039" r="4" fill="#7b83eb"/><circle cx="1026" cy="1042" r="3.2" fill="#7b83eb"/>
<rect x="1018" y="1046" width="14" height="18" fill="#7b83eb" rx="4" />
<rect x="1007" y="1046" width="19" height="18" fill="#5b5fc7" rx="4" />
<rect x="1004" y="1050" width="13" height="12" fill="#4b53bc" rx="2" />
<text x="1006.5" y="1060" font-size="10" fill="#fff" font-weight="700" >T</text>
<path d="M1059 1050 L1064 1045 L1071 1052 L1086 1037 L1091 1042 L1071 1062 Z" stroke="none" fill="#3a8fd9" stroke-width="1" />
<circle cx="1085" cy="1039" r="10" fill="#4cc2ff"/>
<text x="1081.5" y="1043.5" font-size="12" fill="#1c1c1c" >1</text>
<defs><linearGradient id="edg" x1="0" y1="0" x2="1" y2="0.6"><stop offset="0" stop-color="#2fb2ea"/><stop offset="0.55" stop-color="#2cc3b0"/><stop offset="1" stop-color="#62d84e"/></linearGradient><linearGradient id="edb" x1="0" y1="0" x2="0.3" y2="1"><stop offset="0" stop-color="#1f8ee0"/><stop offset="1" stop-color="#1262b8"/></linearGradient><linearGradient id="axg" x1="0" y1="1" x2="1" y2="0"><stop offset="0" stop-color="#3a8dff"/><stop offset="0.3" stop-color="#e04cff"/><stop offset="0.55" stop-color="#ff2a2a"/><stop offset="0.8" stop-color="#ffb800"/><stop offset="1" stop-color="#48e05a"/></linearGradient><linearGradient id="ffg" x1="0.8" y1="0" x2="0.2" y2="1"><stop offset="0" stop-color="#ffe14a"/><stop offset="0.45" stop-color="#ff8a1c"/><stop offset="0.8" stop-color="#ff3b3b"/><stop offset="1" stop-color="#e8237a"/></linearGradient><linearGradient id="ffp" x1="0" y1="0" x2="0.4" y2="1"><stop offset="0" stop-color="#b44fe8"/><stop offset="1" stop-color="#5d5be6"/></linearGradient></defs>
<circle cx="1129" cy="1049.8" r="15" fill="url(#edb)"/>
<path d="M1114 1050 A15 15 0 0 1 1144 1050 C1144 1054.5 1140 1056.5 1135 1056.5 C1130 1056.5 1126.5 1053.5 1126.5 1050 C1126.5 1047 1129 1045 1131 1045 C1126 1042 1117 1043 1114 1050 Z" stroke="none" fill="url(#edg)" stroke-width="1" />
<path d="M1121 1046 C1117 1050 1117 1060 1126 1063.5 C1132 1066 1139 1063 1142 1058.5 C1137 1061 1130 1060 1127 1056 C1124 1052 1124 1048 1126.5 1045.5 Z" stroke="none" fill="#1458a8" stroke-width="1" />
<circle cx="1129" cy="1049.5" r="2.8" fill="#1c1c1c"/>
<rect x="1169" y="1035.5" width="30" height="29" fill="#000a1f" rx="5" />
<path d="M1178.5 1055.5 L1184 1043.5 L1190 1055.5 M1178.5 1055.5 H1183" stroke="url(#axg)" fill="none" stroke-width="3.6" stroke-linecap="round" stroke-linejoin="round"/>
<circle cx="1239" cy="1050.5" r="14" fill="url(#ffg)"/>
<path d="M1243 1035 C1250 1038 1254 1045 1253 1052 C1251 1046 1247 1042 1242 1041 Z" stroke="none" fill="#ffd54a" stroke-width="1" />
<path d="M1227 1043 L1228 1038 L1231 1041 Z" stroke="none" fill="#ff9a20" stroke-width="1" />
<circle cx="1240.5" cy="1049.5" r="7" fill="url(#ffp)"/>
<path d="M1228 1046 C1232 1045 1236 1046 1238 1048 C1234 1047 1231 1048 1229 1050 Z" stroke="none" fill="#ffb020" stroke-width="1" />
<rect x="1235" y="1070.5" width="8" height="3" fill="#9a9a9a" rx="1.5" />
<rect x="1269.5" y="1025.5" width="49" height="49" fill="#2a2a2a" rx="5" />
<rect x="1283" y="1036" width="22" height="27" fill="#1f7a2e" rx="2.5" />
<path d="M1283 1045 V1038.5 Q1283 1036 1285.5 1036 H1294 V1045 Z" stroke="none" fill="#6fd35f" stroke-width="1" />
<path d="M1294 1036 H1302.5 Q1305 1036 1305 1038.5 V1045 H1294 Z" stroke="none" fill="#bdea73" stroke-width="1" />
<rect x="1279" y="1046" width="14" height="14" fill="#0e5836" rx="2.5" />
<path d="M1282.5 1049.5 L1289.5 1056.5 M1289.5 1049.5 L1282.5 1056.5" stroke="#ffffff" fill="none" stroke-width="2" />
<rect x="1284" y="1070" width="20" height="4" fill="#4cc2ff" rx="2" />
<path d="M1611.5 1053 L1618.5 1046 L1625.5 1053" stroke="#ffffff" fill="none" stroke-width="1.6" />
<path d="M1649 1043 C1654 1043 1657 1041 1659 1040 C1661 1041 1664 1043 1668 1043 V1050 C1668 1055 1663 1058 1659 1060 C1654 1058 1649 1055 1649 1050 Z" stroke="none" fill="#2f8fe0" stroke-width="1" />
<circle cx="1663" cy="1056" r="5" fill="#16a34a"/>
<path d="M1660.5 1056 L1662.5 1058 L1665.8 1054.5" stroke="#fff" fill="none" stroke-width="1.3" />
<path d="M1689 1047 C1694 1041 1703 1041 1708 1047 M1692 1050 C1695 1046 1702 1046 1705 1050" stroke="#8a8a8a" fill="none" stroke-width="1.4" />
<path d="M1695 1053 C1697 1051 1700 1051 1702 1053" stroke="#ffffff" fill="none" stroke-width="1.6" />
<circle cx="1698.5" cy="1056" r="1.8" fill="#fff"/>
<path d="M1718 1046 H1722 L1728 1042 V1058 L1722 1054 H1718 Z" stroke="#ffffff" fill="none" stroke-width="1.3" stroke-linejoin="round"/>
<path d="M1731 1046 C1733 1048 1733 1052 1731 1054" stroke="#ffffff" fill="none" stroke-width="1.3" />
<path d="M1734 1043 C1738 1047 1738 1053 1734 1057" stroke="#8a8a8a" fill="none" stroke-width="1.2" />
<rect x="1749.5" y="1044.5" width="16" height="11" fill="none" rx="2" stroke="#ffffff" stroke-width="1.5" />
<rect x="1752" y="1047" width="11" height="6" fill="#ffffff" rx="0.5" />
<rect x="1766" y="1047.5" width="2" height="5" fill="#ffffff" />
<path d="M1754 1039.5 L1750.5 1046 H1754.5 L1752 1051" stroke="#ffffff" fill="none" stroke-width="1.3" fill="#1c1c1c"/>
<text x="1830.3" y="1045" font-size="16.0" fill="#ffffff" textLength="34.97" lengthAdjust="spacingAndGlyphs" >19:03</text>
<text x="1788.9" y="1065" font-size="15.2" fill="#ffffff" textLength="76.41" lengthAdjust="spacingAndGlyphs" >01/11/2025</text>
<path d="M1877 1056.5 C1879 1054.5 1879.5 1052 1879.5 1048.5 C1879.5 1044 1882.5 1041.5 1886 1041.5 C1889.5 1041.5 1892.5 1044 1892.5 1048.5 C1892.5 1052 1893 1054.5 1895 1056.5 Z" stroke="none" fill="#ffffff" stroke-width="1" />
<path d="M1883 1057 H1889 C1889 1059 1887.5 1060 1886 1060 C1884.5 1060 1883 1059 1883 1057 Z" stroke="none" fill="#ffffff" stroke-width="1" />
<path d="M1882.5 1046.5 H1887.5 L1882.5 1051.5 H1887.5" stroke="#1c1c1c" fill="none" stroke-width="1.6" />
<path d="M1889 1041.5 H1894 L1889 1046.5 H1894" stroke="#ffffff" fill="none" stroke-width="1.4" />
</svg></body></html>
